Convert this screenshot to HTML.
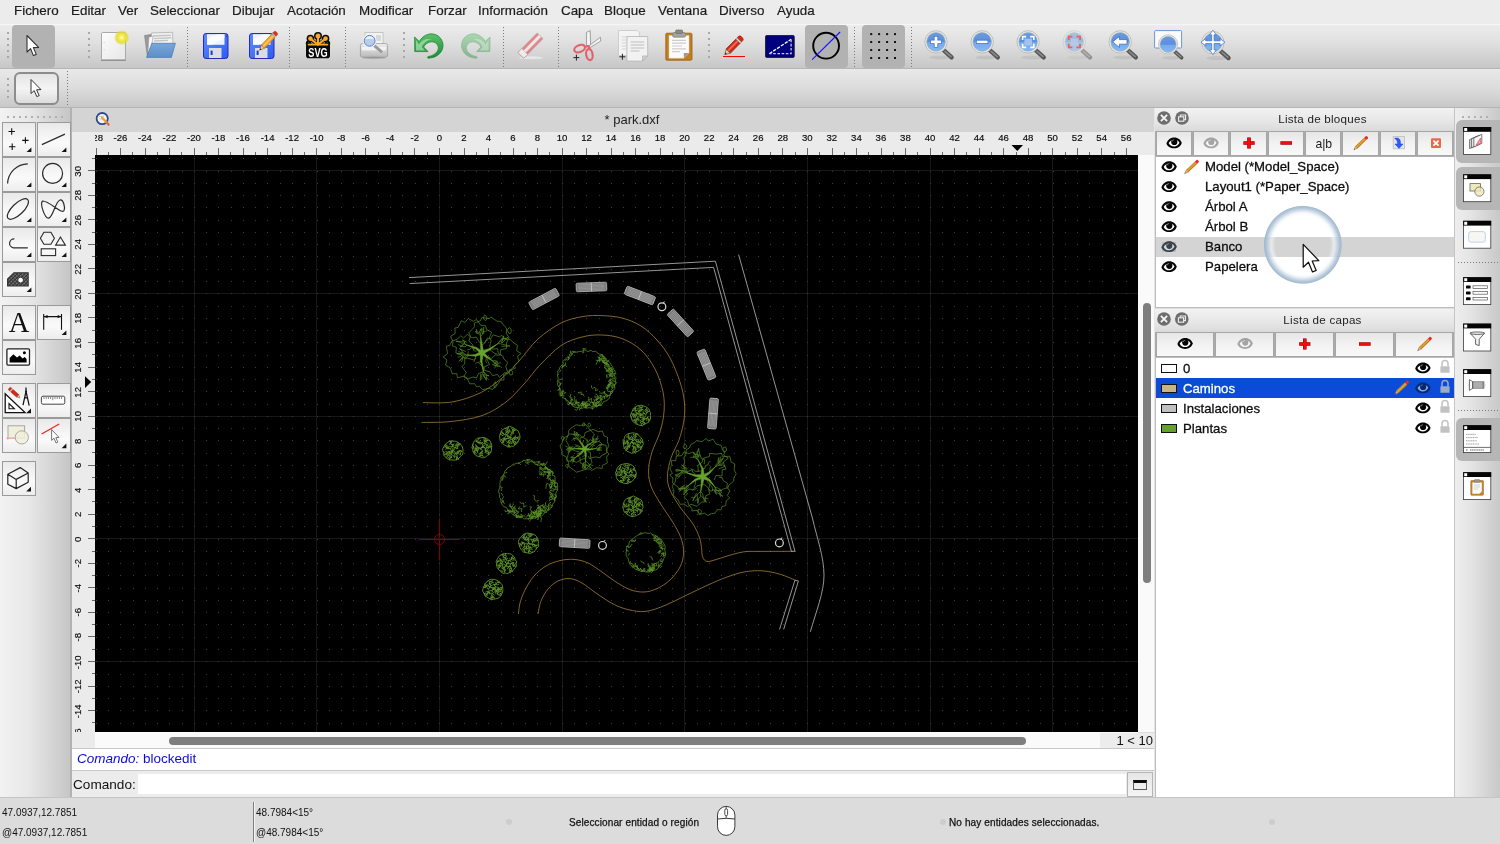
<!DOCTYPE html>
<html><head><meta charset="utf-8"><title>QCAD - park.dxf</title>
<style>
html,body{margin:0;padding:0;width:1500px;height:844px;overflow:hidden;background:#dcdcdc;font-family:"Liberation Sans",sans-serif;color:#1a1a1a}
*{box-sizing:border-box}
.abs{position:absolute}
#menubar{position:absolute;left:0;top:0;width:1500px;height:24px;background:#ececec}
#menubar span{position:absolute;top:2px;font-size:13.4px;line-height:18px;white-space:nowrap;color:#1c1c1c;-webkit-text-stroke:.2px #1c1c1c}
#tb1{position:absolute;left:0;top:24px;width:1500px;height:45px;background:linear-gradient(#ececec,#e0e0e0 40%,#c7c7c7);border-top:1px solid #f6f6f6;border-bottom:1px solid #b6b6b6}
#tb2{position:absolute;left:0;top:69px;width:1500px;height:39px;background:linear-gradient(#e9e9e9,#dcdcdc 50%,#c8c8c8);border-bottom:1px solid #b4b4b4}
.hdl{position:absolute;width:2px;height:26px;background:repeating-linear-gradient(#a8a8a8 0 2px,transparent 2px 6px)}
.sep{position:absolute;width:1px;height:40px;background:repeating-linear-gradient(#7a7a7a 0 1px,transparent 1px 3px)}
.tbsel{position:absolute;background:#b2b2b2;border-radius:4px}
.ic{position:absolute;overflow:visible}
.rl{position:absolute;font-size:9.6px;line-height:12px;color:#0a0a0a;-webkit-text-stroke:.15px #0a0a0a;white-space:nowrap}
.rc{text-align:center}
.rv{transform-origin:0 0;transform:translate(.4px,20.3px) rotate(-90deg);width:40px;text-align:center;margin-top:0}
</style></head><body><div id="root" style="position:absolute;left:0;top:0;width:1500px;height:844px;will-change:transform">
<div id="menubar">
<span style="left:14px">Fichero</span><span style="left:71px">Editar</span><span style="left:118px">Ver</span><span style="left:150px">Seleccionar</span><span style="left:232px">Dibujar</span><span style="left:287px">Acotación</span><span style="left:359px">Modificar</span><span style="left:428px">Forzar</span><span style="left:478px">Información</span><span style="left:561px">Capa</span><span style="left:604px">Bloque</span><span style="left:658px">Ventana</span><span style="left:719px">Diverso</span><span style="left:777px">Ayuda</span>
</div>
<div id="tb1">
<div class="hdl" style="left:7px;top:7px"></div>
<div class="tbsel" style="left:12px;top:0px;width:43px;height:43px"></div>
<div class="hdl" style="left:88px;top:7px"></div>
<div class="sep" style="left:187px;top:2px"></div>
<div class="sep" style="left:289px;top:2px"></div>
<div class="sep" style="left:345px;top:2px"></div>
<div class="hdl" style="left:403px;top:7px"></div>
<div class="sep" style="left:503px;top:2px"></div>
<div class="sep" style="left:558px;top:2px"></div>
<div class="hdl" style="left:708px;top:7px"></div>
<div class="tbsel" style="left:805px;top:0px;width:43px;height:43px"></div>
<div class="sep" style="left:854px;top:2px"></div>
<div class="tbsel" style="left:862px;top:0px;width:43px;height:43px"></div>
<div class="sep" style="left:911px;top:2px"></div>
</div>
<div id="tb2">
<div class="hdl" style="left:7px;top:9px;height:20px"></div>
<div style="position:absolute;left:14px;top:3px;width:45px;height:33px;border:2px solid #8c8c8c;border-radius:6px;background:linear-gradient(#e4e4e4,#f4f4f4 50%,#dcdcdc)"></div>
<div class="sep" style="left:67px;top:2px;height:34px"></div>
</div>
<svg style="position:absolute;left:0;top:0" width="1500" height="110" viewBox="0 0 1500 110">
<defs>
<linearGradient id="gPaper" x1="0" y1="0" x2="1" y2="1"><stop offset="0" stop-color="#fdfdfd"/><stop offset="1" stop-color="#e6e6e6"/></linearGradient>
<radialGradient id="gGlow"><stop offset="0" stop-color="#fffff4"/><stop offset="0.22" stop-color="#f8f266"/><stop offset="0.6" stop-color="#e8e02c" stop-opacity=".92"/><stop offset="0.85" stop-color="#e4da28" stop-opacity=".55"/><stop offset="1" stop-color="#e6dc28" stop-opacity="0"/></radialGradient>
<linearGradient id="gFold" x1="0" y1="0" x2="0" y2="1"><stop offset="0" stop-color="#7aa7d8"/><stop offset="1" stop-color="#5b8ec9"/></linearGradient>
<linearGradient id="gFlop" x1="0" y1="0" x2="1" y2="1"><stop offset="0" stop-color="#5f8cff"/><stop offset="1" stop-color="#2c5cf0"/></linearGradient>
<linearGradient id="gLens" x1="0" y1="0" x2="0" y2="1"><stop offset="0" stop-color="#6a9be0"/><stop offset=".5" stop-color="#5b8fdc"/><stop offset=".52" stop-color="#74a8ea"/><stop offset="1" stop-color="#86baf2"/></linearGradient>
<linearGradient id="gGreen" x1="0" y1="0" x2="0" y2="1"><stop offset="0" stop-color="#5cc06a"/><stop offset="1" stop-color="#1e8a34"/></linearGradient>
<linearGradient id="gPrinter" x1="0" y1="0" x2="0" y2="1"><stop offset="0" stop-color="#f0f0f0"/><stop offset="1" stop-color="#b8b8b8"/></linearGradient>
<g id="floppy">
 <rect x="0.5" y="0.5" width="24.5" height="25" rx="2.5" fill="url(#gFlop)" stroke="#2a2ab4" stroke-width="1"/>
 <rect x="4" y="1.2" width="17.5" height="10.6" fill="#eef2ff"/>
 <path d="M4 11.8 L4 6 L14 1.2 L21.5 1.2 L21.5 5 L9 11.8Z" fill="#ffffff" opacity=".7"/>
 <rect x="6" y="15" width="12.5" height="10" fill="#dcdce4"/>
 <rect x="7.6" y="17.6" width="2" height="4.4" fill="#1c3cc8"/>
 <rect x="22.6" y="2.6" width="1.2" height="1.2" fill="#2a2ab4"/>
</g>
<g id="pencilO"><!-- orange pencil, tip at 0,0 pointing down-left, drawn along +x then rotated -->
 <path d="M0 0 L5 -2.3 L5 2.3Z" fill="#e8c9a0" stroke="#7a5a30" stroke-width=".5"/>
 <path d="M0 0 L1.8 -.85 L1.8 .85Z" fill="#222"/>
 <rect x="5" y="-2.3" width="15" height="4.6" fill="#f4a22a" stroke="#b06a10" stroke-width=".5"/>
 <rect x="5" y="-0.8" width="15" height="1.6" fill="#ffc860"/>
 <rect x="20" y="-2.3" width="1.6" height="4.6" fill="#c8c8c8" stroke="#888" stroke-width=".4"/>
 <path d="M21.6 -2.3 h1.6 a1.6 2.3 0 0 1 0 4.6 h-1.6z" fill="#e03020" stroke="#902010" stroke-width=".4"/>
</g>
<g id="mag"><!-- magnifier centered at 0,0 -->
 <ellipse cx="4" cy="15.5" rx="11" ry="2" fill="#000" opacity=".07"/>
 <path d="M7.6 8.2 L15.6 15.4" stroke="#555" stroke-width="4.4" stroke-linecap="round"/>
 <path d="M9 9.4 L15 14.8" stroke="#8a8a8a" stroke-width="1.6" stroke-linecap="round"/>
 <circle r="11.2" fill="#e9e9e4" stroke="#b4b4ac" stroke-width=".8"/>
 <circle r="9.3" fill="url(#gLens)" stroke="#9aa8b8" stroke-width=".6"/>
</g>
</defs>
<!-- arrow (selected) -->
<path d="M27 35.5 L27 52 L30.6 48.6 L33.4 55.6 L36.2 54.4 L33.4 47.6 L38.6 47.4Z" fill="#fff" stroke="#333" stroke-width="1.1" stroke-linejoin="round"/>
<!-- options arrow -->
<path d="M31 79.5 L31 93.6 L34.2 90.6 L36.8 96.6 L39.2 95.6 L36.6 89.8 L41 89.6Z" fill="#fff" stroke="#333" stroke-width="1" stroke-linejoin="round"/>
<!-- new -->
<rect x="101.5" y="32.5" width="24" height="27.5" rx="1.2" fill="url(#gPaper)" stroke="#a9a9a9"/>
<path d="M101 60.3 h25" stroke="#8e8e8e" stroke-width="1.2"/>
<rect x="103.6" y="42" width="1" height=".8" fill="#bbb"/><rect x="103.6" y="49.4" width="1" height=".8" fill="#bbb"/>
<circle cx="121.7" cy="37.6" r="7.6" fill="url(#gGlow)"/>
<!-- open -->
<path d="M144.6 35.5 L151 34.5 L152 56.5 L147.5 57 Z" fill="#9a9a9a" stroke="#777" stroke-width=".6"/>
<path d="M151.5 33 L172.5 32.3 L173 45 L152 47Z" fill="#f2f2f2" stroke="#9a9a9a" stroke-width=".6"/>
<path d="M153 36 L171 35.2 M153.6 38.6 L171.4 37.8 M154 41 L168 40.4" stroke="#c4c4c4" stroke-width="1.4"/>
<path d="M149 37 L153 36.4 L150.6 52 L148 52Z" fill="#fafafa" stroke="#999" stroke-width=".5"/>
<path d="M151.8 43.3 L175.4 43.3 L171.4 57.4 L146.6 57.4Z" fill="url(#gFold)" stroke="#4d7fbd" stroke-width=".8" stroke-linejoin="round"/>
<!-- save / save as -->
<use href="#floppy" x="203" y="33"/>
<use href="#floppy" x="249" y="33"/>
<g transform="translate(259.6,50.2) rotate(-46.5)"><use href="#pencilO"/></g>
<!-- svg icon -->
<g fill="#0a0a0a" stroke="#0a0a0a" stroke-width="3.6" stroke-linecap="round">
<circle cx="318" cy="36" r="2.2"/><circle cx="310.4" cy="38.6" r="2"/><circle cx="325.6" cy="38.6" r="2"/><circle cx="308.6" cy="43.4" r="1"/><circle cx="327.4" cy="43.4" r="1"/>
<path d="M318 45V36M318 45L310.4 38.6M318 45L325.6 38.6"/>
</g>
<rect x="306" y="43.6" width="24" height="14.6" rx="2.8" fill="#0a0a0a"/>
<g fill="#f9a72b" stroke="#f9a72b" stroke-width="2" stroke-linecap="round">
<circle cx="318" cy="36" r="1.5"/><circle cx="310.4" cy="38.6" r="1.3"/><circle cx="325.6" cy="38.6" r="1.3"/>
<path d="M318 44.6V36M318 44.6L310.4 38.6M318 44.6L325.6 38.6"/>
<path d="M308.6 44.6H327.4" stroke-width="1.8"/>
</g>
<g transform="translate(318,56.6) scale(1,1.22)"><text x="0" y="0" text-anchor="middle" font-family="Liberation Sans, sans-serif" font-weight="bold" font-size="10.4" fill="#fff" textLength="19.4" lengthAdjust="spacingAndGlyphs">SVG</text></g>
<!-- print preview -->
<rect x="365" y="32.4" width="18" height="13" fill="#f3f3f3" stroke="#bcbcbc" stroke-width=".8"/>
<rect x="376" y="35" width="5" height="6" fill="#d8d8d8"/>
<rect x="360.4" y="43.6" width="27.2" height="13.6" rx="2" fill="url(#gPrinter)" stroke="#9a9a9a" stroke-width=".8"/>
<rect x="362" y="47" width="24" height="3.4" fill="#f7f7f7" opacity=".8"/>
<ellipse cx="374" cy="58" rx="12" ry="1.2" fill="#000" opacity=".15"/>
<path d="M374 45.4 L381 51.4" stroke="#9a9a9a" stroke-width="3" stroke-linecap="round"/>
<circle cx="369.6" cy="40.8" r="6.2" fill="#dfe9f7" stroke="#f2f2f2" stroke-width="1.6"/>
<circle cx="369.6" cy="40.8" r="5.4" fill="#b7cdea" stroke="#5a86cf" stroke-width="1"/>
<path d="M365.4 39.4 a4.4 4.4 0 0 1 8.4 0 a9 5 0 0 0 -8.4 0z" fill="#eaf2fc"/>
<!-- undo -->
<g id="undo">
<path d="M414.6 37 L414.8 51.6 L428 51.6 L423.6 47 C426.4 41.8 433.4 39.8 437.2 44.4 C440.4 48.6 437 55 428.2 56.6 C427 57 427.4 58.4 428.6 58.2 C438 57.6 443.6 51.4 443 44.4 C442.2 36.8 435 32.6 428.6 34.2 C424.4 35.2 421 38 419.4 41.6Z" fill="url(#gGreen)" stroke="#1f8a36" stroke-width=".8" stroke-linejoin="round"/>
<path d="M416 40 L416 50.4 L425 50.4 L421.8 47 C423.8 42.6 427.6 39.8 432 39.6 C426 37.6 420.6 41 419 44.4Z" fill="#a6e0ae" opacity=".75"/>
</g>
<g transform="translate(904.6,0) scale(-1,1)" opacity=".42"><use href="#undo"/></g>
<!-- eraser (disabled) -->
<g opacity=".6">
<ellipse cx="531" cy="57.8" rx="12" ry="1.5" fill="#fff" opacity=".8"/>
<g transform="translate(522.2,54) rotate(-45.5)">
<rect x="-2" y="-4.2" width="27.6" height="8.4" rx="1" fill="#e0525a"/>
<rect x="-2" y="-4.2" width="5.6" height="8.4" fill="#fdfdfd" stroke="#999" stroke-width=".6"/>
<rect x="3.6" y="-1.5" width="22" height="3" fill="#f8f0f0"/>
<rect x="-2" y="-4.2" width="27.6" height="8.4" rx="1" fill="none" stroke="#a88" stroke-width=".6"/>
</g></g>
<!-- scissors -->
<path d="M586.6 46 L586.4 32.4 L590.2 30.6 L590.6 45.6Z" fill="#f3f3f3" stroke="#8e8e8e" stroke-width=".8"/>
<path d="M588 46.6 L600.4 37.2 L600.8 41 L590 47.6Z" fill="#f3f3f3" stroke="#8e8e8e" stroke-width=".8"/>
<ellipse cx="579.6" cy="48.6" rx="5.6" ry="3.4" transform="rotate(-22 579.6 48.6)" fill="none" stroke="#e0646c" stroke-width="2.2"/>
<ellipse cx="589.4" cy="54.6" rx="3.2" ry="5.6" transform="rotate(-10 589.4 54.6)" fill="none" stroke="#e0646c" stroke-width="2.2"/>
<path d="M584.4 47 L588.6 46 L590 49.6" fill="none" stroke="#e0646c" stroke-width="2"/>
<path d="M573.4 57.6 h6 M576.4 54.6 v6" stroke="#222" stroke-width="1"/>
<!-- copy -->
<path d="M618.5 30.5 h18.5 l2.4 2.4 v22.6 h-20.9z" fill="#f4f4f4" stroke="#c6c6c6" stroke-width=".8"/>
<path d="M621.6 37 h5 M621.6 40 h5 M621.6 43 h5 M621.6 46 h5 M621.6 49 h5" stroke="#d2d2d2" stroke-width="1.2"/>
<path d="M626.9 36.5 h20.8 v19.4 l-5.2 5.2 h-15.6z" fill="#f2f2f2" stroke="#b4b4b4" stroke-width=".8"/>
<path d="M647.7 55.9 l-5.2 5.2 v-5.2z" fill="#d0d0d0" stroke="#aaa" stroke-width=".6"/>
<path d="M630.6 42 h13.6 M630.6 45 h13.6 M630.6 48 h13.6 M630.6 51 h9" stroke="#d0d0d0" stroke-width="1.3"/>
<path d="M619.4 56.8 h6 M622.4 53.8 v6" stroke="#222" stroke-width="1"/>
<!-- paste -->
<rect x="665.8" y="33.2" width="26.2" height="27" rx="1.2" fill="#c47e1c" stroke="#9a5e10" stroke-width=".8"/>
<path d="M669 35.4 h20 v17.6 l-5.2 5.2 h-14.8z" fill="#fbfbfb" stroke="#cfcfcf" stroke-width=".5"/>
<path d="M689 53 l-5.2 5.2 v-5.2z" fill="#9a9a9a"/>
<path d="M672 40.4 h14 M672 43.2 h14 M672 46 h10 M672 48.8 h14 M672 51.6 h8" stroke="#cdcdcd" stroke-width="1.2"/>
<rect x="672.6" y="32.6" width="13" height="4.6" rx="1.4" fill="#a4a49c" stroke="#77776f" stroke-width=".6"/>
<rect x="675.6" y="30" width="7" height="3.4" rx="1" fill="#8c8c84" stroke="#66665f" stroke-width=".6"/>
<!-- red pencil -->
<path d="M723 56.5 h22" stroke="#f00" stroke-width="1"/>
<g transform="translate(724.8,54.6) rotate(-45.5) scale(1.02,1.3)">
 <path d="M0 0 L5 -2.3 L5 2.3Z" fill="#e8c9a0" stroke="#5a4020" stroke-width=".5"/>
 <path d="M0 0 L1.8 -.85 L1.8 .85Z" fill="#222"/>
 <rect x="5" y="-2.3" width="13.6" height="4.6" fill="#d8281c" stroke="#6a3010" stroke-width=".6"/>
 <rect x="5" y="-1" width="13.6" height="1.4" fill="#f06a50"/>
 <rect x="18.6" y="-2.3" width="1.8" height="4.6" fill="#d8d8d8" stroke="#888" stroke-width=".4"/>
 <path d="M20.4 -2.3 h1.8 a1.8 2.3 0 0 1 0 4.6 h-1.8z" fill="#e02818" stroke="#801808" stroke-width=".5"/>
</g>
<!-- draft -->
<rect x="765.6" y="35.6" width="28.6" height="21.8" rx=".8" fill="#00007e" stroke="#1e1e2a" stroke-width="1"/>
<path d="M769.4 53.7 L791.1 39.3" stroke="#fff" stroke-width="1.3" stroke-dasharray="3.4 1.2"/>
<path d="M791.1 39.6 V53.7 H769.6" fill="none" stroke="#c8c8e8" stroke-width="1.3" stroke-dasharray="2.6 1.6"/>
<!-- circle slash -->
<circle cx="826.1" cy="45.7" r="12.9" fill="none" stroke="#000" stroke-width="1.9"/>
<path d="M812.1 59.7 L840.1 32" stroke="#1414ff" stroke-width="1.1"/>
<!-- grid dots -->
<g fill="#111">
<rect x="870.2" y="33.1" width="2" height="2"/><rect x="878.1" y="33.1" width="2" height="2"/><rect x="886.1" y="33.1" width="2" height="2"/><rect x="894" y="33.1" width="2" height="2"/>
<rect x="870.2" y="41" width="2" height="2"/><rect x="878.1" y="41" width="2" height="2"/><rect x="886.1" y="41" width="2" height="2"/><rect x="894" y="41" width="2" height="2"/>
<rect x="870.2" y="49" width="2" height="2"/><rect x="878.1" y="49" width="2" height="2"/><rect x="886.1" y="49" width="2" height="2"/><rect x="894" y="49" width="2" height="2"/>
<rect x="870.2" y="57" width="2" height="2"/><rect x="878.1" y="57" width="2" height="2"/><rect x="886.1" y="57" width="2" height="2"/><rect x="894" y="57" width="2" height="2"/>
</g>
<!-- zoom in -->
<use href="#mag" x="936" y="41.9"/>
<path d="M930.4 41.9 h11.2 M936 36.3 v11.2" stroke="#3a6cc0" stroke-width="4.4"/>
<path d="M930.9 41.9 h10.2 M936 36.8 v10.2" stroke="#fff" stroke-width="2.8"/>
<!-- zoom out -->
<use href="#mag" x="982.2" y="41.9"/>
<path d="M976.2 41.9 h12" stroke="#3a6cc0" stroke-width="4.2"/>
<path d="M976.8 41.9 h10.8" stroke="#fff" stroke-width="2.6"/>
<!-- zoom auto -->
<use href="#mag" x="1028.1" y="41.9"/>
<g fill="none" stroke="#fff" stroke-width="1.6"><path d="M1022.6 40 v-3.4 h3.6 M1030.2 36.6 h3.6 v3.4 M1033.8 43.8 v3.6 h-3.6 M1026.2 47.4 h-3.6 v-3.6"/></g>
<rect x="1024.4" y="38.6" width="7.6" height="6.8" fill="#a8c6f0" opacity=".9"/>
<!-- zoom selection (disabled) -->
<g opacity=".5"><use href="#mag" x="1074.3" y="41.9"/></g>
<g fill="none" stroke="#e86464" stroke-width="1.9"><path d="M1068.8 40 v-3.4 h3.6 M1076.4 36.6 h3.6 v3.4 M1080 43.8 v3.6 h-3.6 M1072.4 47.4 h-3.6 v-3.6"/></g>
<rect x="1070.8" y="38.8" width="7.2" height="6.4" fill="#b8cce8" opacity=".8"/>
<!-- zoom prev -->
<use href="#mag" x="1120.2" y="41.9"/>
<path d="M1112.6 41.9 L1119.4 36.4 V39.6 H1127 V44.2 H1119.4 V47.4Z" fill="#fff" stroke="#3a6cc0" stroke-width=".8" stroke-linejoin="round"/>
<!-- zoom window -->
<rect x="1154.6" y="30.6" width="27" height="17.4" rx="1" fill="#fbfbfd" stroke="#6a94dc" stroke-width="1"/>
<g transform="translate(1168.1,44.4) scale(.86)"><use href="#mag"/></g>
<!-- pan -->
<use href="#mag" x="1212.9" y="42.6"/>
<g fill="#fff" stroke="#3a6cc0" stroke-width=".7" stroke-linejoin="round">
<path d="M1212.9 30.2 l3.4 4.6 h-2.2 v6 h6 v-2.2 l4.8 3.6 l-4.8 3.6 v-2.2 h-6 v6.2 h2.2 l-3.4 4.8 l-3.4 -4.8 h2.2 v-6.2 h-6 v2.2 l-4.8 -3.6 l4.8 -3.6 v2.2 h6 v-6 h-2.2z"/>
</g>
</svg>
<style>.lb{position:absolute;width:34px;height:34.5px;border:1px solid #9a9a9a;background:linear-gradient(#e9e9e9,#f6f6f6 45%,#fafafa 60%,#ededed)}</style>
<div style="position:absolute;left:0;top:108px;width:70px;height:690px;background:linear-gradient(90deg,#f2f2f2,#e8e8e8 40%,#c6c6c6)"></div>
<div style="position:absolute;left:70px;top:108px;width:2px;height:690px;background:#b2b2b2"></div>
<div style="position:absolute;left:7px;top:116px;width:58px;height:2px;background:repeating-linear-gradient(90deg,#b0b0b0 0 2px,transparent 2px 6px)"></div>
<div class="lb" style="left:2px;top:122px"></div>
<div class="lb" style="left:37px;top:122px"></div>
<div class="lb" style="left:2px;top:157px"></div>
<div class="lb" style="left:37px;top:157px"></div>
<div class="lb" style="left:2px;top:192px"></div>
<div class="lb" style="left:37px;top:192px"></div>
<div class="lb" style="left:2px;top:227px"></div>
<div class="lb" style="left:37px;top:227px"></div>
<div class="lb" style="left:2px;top:262px"></div>
<div class="lb" style="left:2px;top:305px"></div>
<div class="lb" style="left:37px;top:305px"></div>
<div class="lb" style="left:2px;top:340px"></div>
<div class="lb" style="left:2px;top:383px"></div>
<div class="lb" style="left:37px;top:383px"></div>
<div class="lb" style="left:2px;top:418px"></div>
<div class="lb" style="left:37px;top:418px"></div>
<div class="lb" style="left:2px;top:461px"></div>
<svg style="position:absolute;left:0;top:108px" width="72" height="400" viewBox="0 108 72 400" fill="none" stroke="#2a2a2a" stroke-width="1">
<defs><path id="ct" d="M0 0 v4.6 h-4.8z" fill="#111" stroke="none"/>
<pattern id="hat" width="2.6" height="2.6" patternUnits="userSpaceOnUse" patternTransform="rotate(-45)"><rect width="2.6" height="2.6" fill="#f0f0f0"/><rect width="2.6" height=".8" fill="#8c8c8c"/></pattern></defs>
<!-- points -->
<path d="M8.5 131.5 h6.4 M11.7 128.3 v6.4 M22.2 140.4 h6.4 M25.4 137.2 v6.4 M9 146.7 h6.4 M12.2 143.5 v6.4" stroke="#111" stroke-width="1.1"/>
<use href="#ct" x="31.4" y="147.4"/><use href="#ct" x="66.4" y="147.4"/>
<path d="M41.9 144.6 L64.9 134.1" stroke-width="1.2"/>
<!-- arc circle -->
<path d="M7.6 183.6 A20.4 20.4 0 0 1 27.8 163.8" stroke-width="1.2"/>
<circle cx="52.6" cy="173.4" r="10" stroke-width="1.2"/>
<use href="#ct" x="31.4" y="182.4"/><use href="#ct" x="66.4" y="182.4"/>
<!-- ellipse spline -->
<ellipse cx="17.9" cy="209" rx="13.6" ry="5.6" transform="rotate(-44 17.9 209)" stroke-width="1.2"/>
<path d="M42.6 201 C39.5 204 45 218.6 48.6 218.2 C52.8 217.8 55.4 201.4 60 200 C63.4 199 65.4 207.4 64 210.6 C62 214.6 49 200.6 42.6 201Z" stroke-width="1.2"/>
<use href="#ct" x="31.4" y="217.4"/><use href="#ct" x="66.4" y="217.4"/>
<!-- polyline, shapes -->
<path d="M14.4 238.9 A4.5 4.5 0 0 0 13.2 247.8 L27.8 247.8" stroke-width="1.2"/>
<path d="M40.4 238.2 L43.9 232.2 H50.9 L54.4 238.2 L50.9 244.2 H43.9Z" stroke-width="1.1"/>
<path d="M60.4 237 L65.4 245.1 H55.6Z" stroke-width="1.1"/>
<rect x="41.2" y="248.8" width="14.4" height="6.8" stroke-width="1.1"/>
<use href="#ct" x="31.4" y="252.4"/><use href="#ct" x="66.4" y="252.4"/>
<!-- hatch -->
<path d="M7.6 286 V279.1 L14 272.8 H28.2 V286Z" fill="url(#hat)" stroke="#333" stroke-width="1.1"/>
<circle cx="20.6" cy="280.1" r="2.9" fill="#fafafa" stroke="#333"/>
<use href="#ct" x="31.4" y="287.4"/>
<!-- dimension -->
<path d="M43.7 314 V329.8 M61.5 314 V329.8 M44 316.6 H61" stroke="#111" stroke-width="1.1"/>
<path d="M44 316.6 l3.6 -1.6 v3.2z M61.2 316.6 l-3.6 -1.6 v3.2z" fill="#111" stroke="none"/>
<use href="#ct" x="66.4" y="330.4"/>
<!-- image -->
<rect x="6.9" y="348.9" width="22.6" height="16.2" rx="1" fill="#fff" stroke="#222" stroke-width="1.3"/>
<path d="M9.6 362.6 V358 L13.4 354.2 L17 357.6 L19.6 355.6 L22.6 358.4 L24.6 357 L26.6 359 V362.6Z" fill="#000" stroke="none"/>
<circle cx="24.4" cy="352.8" r="1.5" fill="#000" stroke="none"/>
<!-- modify -->
<path d="M5.2 393.8 V412.6 H25 Z" fill="#fff" stroke="#111" stroke-width="1.3"/>
<path d="M9 403.6 V408.8 H14.4Z" stroke="#111" stroke-width="1.1"/>
<g transform="translate(19.8,397.8) rotate(-138)"><path d="M0 0 L3 -1.7 L3 1.7Z" fill="#e8c9a0" stroke="#5a4020" stroke-width=".4"/><rect x="3" y="-1.7" width="8" height="3.4" fill="#d8281c" stroke="#7a2010" stroke-width=".4"/><rect x="11" y="-1.7" width="1.2" height="3.4" fill="#ccc" stroke="none"/><path d="M12.2 -1.7 h1 a1.2 1.7 0 0 1 0 3.4 h-1z" fill="#e02818" stroke="#801808" stroke-width=".4"/></g>
<path d="M26 387.4 V391.4 M26 391.4 L23 405.2 M26 391.4 L29.2 405.6 M24.4 397.8 H27.6" stroke="#111" stroke-width="1.25"/>
<circle cx="26" cy="391.4" r="1" fill="#111" stroke="none"/>
<use href="#ct" x="31" y="408.6"/>
<!-- ruler -->
<rect x="41.4" y="396.2" width="23.4" height="8" rx="1.6" fill="#fdfdfd" stroke="#444" stroke-width="1"/>
<path d="M44 397 v2 M46.2 397 v2 M48.4 397 v2 M50.6 397 v2 M52.8 397 v3.2 M55 397 v2 M57.2 397 v2 M59.4 397 v2 M61.6 397 v2" stroke="#555" stroke-width=".7"/>
<!-- block (faded) -->
<rect x="8" y="425.8" width="16.6" height="12.4" fill="#f1eedb" stroke="#a8a8a0" stroke-width="1"/>
<circle cx="21.8" cy="437.4" r="6.6" fill="#f1eedb" fill-opacity=".85" stroke="#a8a8a0" stroke-width="1"/>
<circle cx="7.8" cy="438.2" r="1.3" fill="#f0a0a0" stroke="none"/>
<path d="M8 438.2 H15" stroke="#f0b0b0" stroke-width="1"/>
<!-- snap -->
<path d="M41.6 433.9 L59.2 424" stroke="#f02020" stroke-width="1.2"/>
<path d="M51.6 429.6 V440.4 L54 438.2 L56 443 L57.8 442.2 L55.8 437.6 L59 437.4Z" fill="#fff" stroke="#666" stroke-width=".9" stroke-linejoin="round"/>
<use href="#ct" x="66.4" y="443.6"/>
<!-- 3d -->
<path d="M20.2 467.6 L28.2 473 V482.2 L16.2 488.6 L7.8 484.2 V474.2Z M7.8 474.2 L16.2 479.4 L28.2 473 M16.2 479.4 V488.6" stroke="#222" stroke-width="1.2" stroke-linejoin="round"/>
<use href="#ct" x="31" y="486.8"/>
</svg>
<div style="position:absolute;left:2px;top:305px;width:34px;height:35px;text-align:center;font-family:'Liberation Serif',serif;font-size:28.5px;line-height:35px;color:#111">A</div>
<!-- document area -->
<div style="position:absolute;left:72px;top:108px;width:1083px;height:24px;background:#d4d4d4"></div>
<div style="position:absolute;left:72px;top:111px;width:1083px;text-align:center;font-size:13px;line-height:18px;color:#222;padding-left:37px">* park.dxf</div>
<div style="position:absolute;left:72px;top:132px;width:1082px;height:23px;background:#ebebeb"></div>
<div style="position:absolute;left:72px;top:155px;width:23px;height:577px;background:#ebebeb"></div>
<svg style="position:absolute;left:0;top:0" width="1500" height="844" shape-rendering="crispEdges"><rect x="96" y="148" width="1" height="7" fill="#6a6a6a"/><rect x="108" y="152" width="1" height="3" fill="#6a6a6a"/><rect x="120" y="148" width="1" height="7" fill="#6a6a6a"/><rect x="132" y="152" width="1" height="3" fill="#6a6a6a"/><rect x="145" y="148" width="1" height="7" fill="#6a6a6a"/><rect x="157" y="152" width="1" height="3" fill="#6a6a6a"/><rect x="169" y="148" width="1" height="7" fill="#6a6a6a"/><rect x="181" y="152" width="1" height="3" fill="#6a6a6a"/><rect x="194" y="148" width="1" height="7" fill="#6a6a6a"/><rect x="206" y="152" width="1" height="3" fill="#6a6a6a"/><rect x="218" y="148" width="1" height="7" fill="#6a6a6a"/><rect x="230" y="152" width="1" height="3" fill="#6a6a6a"/><rect x="243" y="148" width="1" height="7" fill="#6a6a6a"/><rect x="255" y="152" width="1" height="3" fill="#6a6a6a"/><rect x="267" y="148" width="1" height="7" fill="#6a6a6a"/><rect x="280" y="152" width="1" height="3" fill="#6a6a6a"/><rect x="292" y="148" width="1" height="7" fill="#6a6a6a"/><rect x="304" y="152" width="1" height="3" fill="#6a6a6a"/><rect x="316" y="148" width="1" height="7" fill="#6a6a6a"/><rect x="329" y="152" width="1" height="3" fill="#6a6a6a"/><rect x="341" y="148" width="1" height="7" fill="#6a6a6a"/><rect x="353" y="152" width="1" height="3" fill="#6a6a6a"/><rect x="365" y="148" width="1" height="7" fill="#6a6a6a"/><rect x="378" y="152" width="1" height="3" fill="#6a6a6a"/><rect x="390" y="148" width="1" height="7" fill="#6a6a6a"/><rect x="402" y="152" width="1" height="3" fill="#6a6a6a"/><rect x="414" y="148" width="1" height="7" fill="#6a6a6a"/><rect x="427" y="152" width="1" height="3" fill="#6a6a6a"/><rect x="439" y="148" width="1" height="7" fill="#6a6a6a"/><rect x="451" y="152" width="1" height="3" fill="#6a6a6a"/><rect x="464" y="148" width="1" height="7" fill="#6a6a6a"/><rect x="476" y="152" width="1" height="3" fill="#6a6a6a"/><rect x="488" y="148" width="1" height="7" fill="#6a6a6a"/><rect x="500" y="152" width="1" height="3" fill="#6a6a6a"/><rect x="513" y="148" width="1" height="7" fill="#6a6a6a"/><rect x="525" y="152" width="1" height="3" fill="#6a6a6a"/><rect x="537" y="148" width="1" height="7" fill="#6a6a6a"/><rect x="549" y="152" width="1" height="3" fill="#6a6a6a"/><rect x="562" y="148" width="1" height="7" fill="#6a6a6a"/><rect x="574" y="152" width="1" height="3" fill="#6a6a6a"/><rect x="586" y="148" width="1" height="7" fill="#6a6a6a"/><rect x="598" y="152" width="1" height="3" fill="#6a6a6a"/><rect x="611" y="148" width="1" height="7" fill="#6a6a6a"/><rect x="623" y="152" width="1" height="3" fill="#6a6a6a"/><rect x="635" y="148" width="1" height="7" fill="#6a6a6a"/><rect x="648" y="152" width="1" height="3" fill="#6a6a6a"/><rect x="660" y="148" width="1" height="7" fill="#6a6a6a"/><rect x="672" y="152" width="1" height="3" fill="#6a6a6a"/><rect x="684" y="148" width="1" height="7" fill="#6a6a6a"/><rect x="697" y="152" width="1" height="3" fill="#6a6a6a"/><rect x="709" y="148" width="1" height="7" fill="#6a6a6a"/><rect x="721" y="152" width="1" height="3" fill="#6a6a6a"/><rect x="733" y="148" width="1" height="7" fill="#6a6a6a"/><rect x="746" y="152" width="1" height="3" fill="#6a6a6a"/><rect x="758" y="148" width="1" height="7" fill="#6a6a6a"/><rect x="770" y="152" width="1" height="3" fill="#6a6a6a"/><rect x="782" y="148" width="1" height="7" fill="#6a6a6a"/><rect x="795" y="152" width="1" height="3" fill="#6a6a6a"/><rect x="807" y="148" width="1" height="7" fill="#6a6a6a"/><rect x="819" y="152" width="1" height="3" fill="#6a6a6a"/><rect x="832" y="148" width="1" height="7" fill="#6a6a6a"/><rect x="844" y="152" width="1" height="3" fill="#6a6a6a"/><rect x="856" y="148" width="1" height="7" fill="#6a6a6a"/><rect x="868" y="152" width="1" height="3" fill="#6a6a6a"/><rect x="881" y="148" width="1" height="7" fill="#6a6a6a"/><rect x="893" y="152" width="1" height="3" fill="#6a6a6a"/><rect x="905" y="148" width="1" height="7" fill="#6a6a6a"/><rect x="917" y="152" width="1" height="3" fill="#6a6a6a"/><rect x="930" y="148" width="1" height="7" fill="#6a6a6a"/><rect x="942" y="152" width="1" height="3" fill="#6a6a6a"/><rect x="954" y="148" width="1" height="7" fill="#6a6a6a"/><rect x="966" y="152" width="1" height="3" fill="#6a6a6a"/><rect x="979" y="148" width="1" height="7" fill="#6a6a6a"/><rect x="991" y="152" width="1" height="3" fill="#6a6a6a"/><rect x="1003" y="148" width="1" height="7" fill="#6a6a6a"/><rect x="1016" y="152" width="1" height="3" fill="#6a6a6a"/><rect x="1028" y="148" width="1" height="7" fill="#6a6a6a"/><rect x="1040" y="152" width="1" height="3" fill="#6a6a6a"/><rect x="1052" y="148" width="1" height="7" fill="#6a6a6a"/><rect x="1065" y="152" width="1" height="3" fill="#6a6a6a"/><rect x="1077" y="148" width="1" height="7" fill="#6a6a6a"/><rect x="1089" y="152" width="1" height="3" fill="#6a6a6a"/><rect x="1101" y="148" width="1" height="7" fill="#6a6a6a"/><rect x="1114" y="152" width="1" height="3" fill="#6a6a6a"/><rect x="1126" y="148" width="1" height="7" fill="#6a6a6a"/><rect x="92" y="722" width="3" height="1" fill="#6a6a6a"/><rect x="88" y="710" width="7" height="1" fill="#6a6a6a"/><rect x="92" y="698" width="3" height="1" fill="#6a6a6a"/><rect x="88" y="686" width="7" height="1" fill="#6a6a6a"/><rect x="92" y="673" width="3" height="1" fill="#6a6a6a"/><rect x="88" y="661" width="7" height="1" fill="#6a6a6a"/><rect x="92" y="649" width="3" height="1" fill="#6a6a6a"/><rect x="88" y="636" width="7" height="1" fill="#6a6a6a"/><rect x="92" y="624" width="3" height="1" fill="#6a6a6a"/><rect x="88" y="612" width="7" height="1" fill="#6a6a6a"/><rect x="92" y="600" width="3" height="1" fill="#6a6a6a"/><rect x="88" y="587" width="7" height="1" fill="#6a6a6a"/><rect x="92" y="575" width="3" height="1" fill="#6a6a6a"/><rect x="88" y="563" width="7" height="1" fill="#6a6a6a"/><rect x="92" y="551" width="3" height="1" fill="#6a6a6a"/><rect x="88" y="538" width="7" height="1" fill="#6a6a6a"/><rect x="92" y="526" width="3" height="1" fill="#6a6a6a"/><rect x="88" y="514" width="7" height="1" fill="#6a6a6a"/><rect x="92" y="501" width="3" height="1" fill="#6a6a6a"/><rect x="88" y="489" width="7" height="1" fill="#6a6a6a"/><rect x="92" y="477" width="3" height="1" fill="#6a6a6a"/><rect x="88" y="465" width="7" height="1" fill="#6a6a6a"/><rect x="92" y="452" width="3" height="1" fill="#6a6a6a"/><rect x="88" y="440" width="7" height="1" fill="#6a6a6a"/><rect x="92" y="428" width="3" height="1" fill="#6a6a6a"/><rect x="88" y="416" width="7" height="1" fill="#6a6a6a"/><rect x="92" y="403" width="3" height="1" fill="#6a6a6a"/><rect x="88" y="391" width="7" height="1" fill="#6a6a6a"/><rect x="92" y="379" width="3" height="1" fill="#6a6a6a"/><rect x="88" y="367" width="7" height="1" fill="#6a6a6a"/><rect x="92" y="354" width="3" height="1" fill="#6a6a6a"/><rect x="88" y="342" width="7" height="1" fill="#6a6a6a"/><rect x="92" y="330" width="3" height="1" fill="#6a6a6a"/><rect x="88" y="317" width="7" height="1" fill="#6a6a6a"/><rect x="92" y="305" width="3" height="1" fill="#6a6a6a"/><rect x="88" y="293" width="7" height="1" fill="#6a6a6a"/><rect x="92" y="281" width="3" height="1" fill="#6a6a6a"/><rect x="88" y="268" width="7" height="1" fill="#6a6a6a"/><rect x="92" y="256" width="3" height="1" fill="#6a6a6a"/><rect x="88" y="244" width="7" height="1" fill="#6a6a6a"/><rect x="92" y="232" width="3" height="1" fill="#6a6a6a"/><rect x="88" y="219" width="7" height="1" fill="#6a6a6a"/><rect x="92" y="207" width="3" height="1" fill="#6a6a6a"/><rect x="88" y="195" width="7" height="1" fill="#6a6a6a"/><rect x="92" y="183" width="3" height="1" fill="#6a6a6a"/><rect x="88" y="170" width="7" height="1" fill="#6a6a6a"/><rect x="92" y="158" width="3" height="1" fill="#6a6a6a"/></svg>
<div class="rl" style="left:95px;top:132px;width:8px;overflow:hidden;height:14px"><span style="position:absolute;right:0">28</span></div>
<div class="rl rc" style="left:100.4px;top:132px;width:40px">-26</div>
<div class="rl rc" style="left:124.9px;top:132px;width:40px">-24</div>
<div class="rl rc" style="left:149.4px;top:132px;width:40px">-22</div>
<div class="rl rc" style="left:174.0px;top:132px;width:40px">-20</div>
<div class="rl rc" style="left:198.5px;top:132px;width:40px">-18</div>
<div class="rl rc" style="left:223.0px;top:132px;width:40px">-16</div>
<div class="rl rc" style="left:247.6px;top:132px;width:40px">-14</div>
<div class="rl rc" style="left:272.1px;top:132px;width:40px">-12</div>
<div class="rl rc" style="left:296.6px;top:132px;width:40px">-10</div>
<div class="rl rc" style="left:321.2px;top:132px;width:40px">-8</div>
<div class="rl rc" style="left:345.7px;top:132px;width:40px">-6</div>
<div class="rl rc" style="left:370.2px;top:132px;width:40px">-4</div>
<div class="rl rc" style="left:394.8px;top:132px;width:40px">-2</div>
<div class="rl rc" style="left:419.3px;top:132px;width:40px">0</div>
<div class="rl rc" style="left:443.8px;top:132px;width:40px">2</div>
<div class="rl rc" style="left:468.4px;top:132px;width:40px">4</div>
<div class="rl rc" style="left:492.9px;top:132px;width:40px">6</div>
<div class="rl rc" style="left:517.4px;top:132px;width:40px">8</div>
<div class="rl rc" style="left:542.0px;top:132px;width:40px">10</div>
<div class="rl rc" style="left:566.5px;top:132px;width:40px">12</div>
<div class="rl rc" style="left:591.0px;top:132px;width:40px">14</div>
<div class="rl rc" style="left:615.6px;top:132px;width:40px">16</div>
<div class="rl rc" style="left:640.1px;top:132px;width:40px">18</div>
<div class="rl rc" style="left:664.6px;top:132px;width:40px">20</div>
<div class="rl rc" style="left:689.2px;top:132px;width:40px">22</div>
<div class="rl rc" style="left:713.7px;top:132px;width:40px">24</div>
<div class="rl rc" style="left:738.2px;top:132px;width:40px">26</div>
<div class="rl rc" style="left:762.8px;top:132px;width:40px">28</div>
<div class="rl rc" style="left:787.3px;top:132px;width:40px">30</div>
<div class="rl rc" style="left:811.8px;top:132px;width:40px">32</div>
<div class="rl rc" style="left:836.4px;top:132px;width:40px">34</div>
<div class="rl rc" style="left:860.9px;top:132px;width:40px">36</div>
<div class="rl rc" style="left:885.4px;top:132px;width:40px">38</div>
<div class="rl rc" style="left:910.0px;top:132px;width:40px">40</div>
<div class="rl rc" style="left:934.5px;top:132px;width:40px">42</div>
<div class="rl rc" style="left:959.0px;top:132px;width:40px">44</div>
<div class="rl rc" style="left:983.6px;top:132px;width:40px">46</div>
<div class="rl rc" style="left:1008.1px;top:132px;width:40px">48</div>
<div class="rl rc" style="left:1032.6px;top:132px;width:40px">50</div>
<div class="rl rc" style="left:1057.2px;top:132px;width:40px">52</div>
<div class="rl rc" style="left:1081.7px;top:132px;width:40px">54</div>
<div class="rl rc" style="left:1106.2px;top:132px;width:40px">56</div>
<div class="rl rv" style="left:72px;top:710.5px">-14</div>
<div class="rl rv" style="left:72px;top:686.0px">-12</div>
<div class="rl rv" style="left:72px;top:661.5px">-10</div>
<div class="rl rv" style="left:72px;top:636.9px">-8</div>
<div class="rl rv" style="left:72px;top:612.4px">-6</div>
<div class="rl rv" style="left:72px;top:587.9px">-4</div>
<div class="rl rv" style="left:72px;top:563.3px">-2</div>
<div class="rl rv" style="left:72px;top:538.8px">0</div>
<div class="rl rv" style="left:72px;top:514.3px">2</div>
<div class="rl rv" style="left:72px;top:489.7px">4</div>
<div class="rl rv" style="left:72px;top:465.2px">6</div>
<div class="rl rv" style="left:72px;top:440.7px">8</div>
<div class="rl rv" style="left:72px;top:416.1px">10</div>
<div class="rl rv" style="left:72px;top:391.6px">12</div>
<div class="rl rv" style="left:72px;top:367.1px">14</div>
<div class="rl rv" style="left:72px;top:342.5px">16</div>
<div class="rl rv" style="left:72px;top:318.0px">18</div>
<div class="rl rv" style="left:72px;top:293.5px">20</div>
<div class="rl rv" style="left:72px;top:268.9px">22</div>
<div class="rl rv" style="left:72px;top:244.4px">24</div>
<div class="rl rv" style="left:72px;top:219.9px">26</div>
<div class="rl rv" style="left:72px;top:195.3px">28</div>
<div class="rl rv" style="left:72px;top:170.8px">30</div>
<div style="position:absolute;left:72px;top:727px;width:23px;height:5px;overflow:hidden"><div class="rl rv" style="left:0;top:8.1px">-16</div></div><svg id="cv" style="position:absolute;left:95px;top:155px;background:#000" width="1043" height="577" viewBox="0 0 1043 577">
<defs><g id="dr" fill="#3b3b3b"><rect x="1" width="1" height="1"/><rect x="13" width="1" height="1"/><rect x="25" width="1" height="1"/><rect x="38" width="1" height="1"/><rect x="50" width="1" height="1"/><rect x="62" width="1" height="1"/><rect x="74" width="1" height="1"/><rect x="87" width="1" height="1"/><rect x="99" width="1" height="1"/><rect x="111" width="1" height="1"/><rect x="123" width="1" height="1"/><rect x="136" width="1" height="1"/><rect x="148" width="1" height="1"/><rect x="160" width="1" height="1"/><rect x="172" width="1" height="1"/><rect x="185" width="1" height="1"/><rect x="197" width="1" height="1"/><rect x="209" width="1" height="1"/><rect x="222" width="1" height="1"/><rect x="234" width="1" height="1"/><rect x="246" width="1" height="1"/><rect x="258" width="1" height="1"/><rect x="271" width="1" height="1"/><rect x="283" width="1" height="1"/><rect x="295" width="1" height="1"/><rect x="307" width="1" height="1"/><rect x="320" width="1" height="1"/><rect x="332" width="1" height="1"/><rect x="344" width="1" height="1"/><rect x="356" width="1" height="1"/><rect x="369" width="1" height="1"/><rect x="381" width="1" height="1"/><rect x="393" width="1" height="1"/><rect x="406" width="1" height="1"/><rect x="418" width="1" height="1"/><rect x="430" width="1" height="1"/><rect x="442" width="1" height="1"/><rect x="455" width="1" height="1"/><rect x="467" width="1" height="1"/><rect x="479" width="1" height="1"/><rect x="491" width="1" height="1"/><rect x="504" width="1" height="1"/><rect x="516" width="1" height="1"/><rect x="528" width="1" height="1"/><rect x="540" width="1" height="1"/><rect x="553" width="1" height="1"/><rect x="565" width="1" height="1"/><rect x="577" width="1" height="1"/><rect x="590" width="1" height="1"/><rect x="602" width="1" height="1"/><rect x="614" width="1" height="1"/><rect x="626" width="1" height="1"/><rect x="639" width="1" height="1"/><rect x="651" width="1" height="1"/><rect x="663" width="1" height="1"/><rect x="675" width="1" height="1"/><rect x="688" width="1" height="1"/><rect x="700" width="1" height="1"/><rect x="712" width="1" height="1"/><rect x="724" width="1" height="1"/><rect x="737" width="1" height="1"/><rect x="749" width="1" height="1"/><rect x="761" width="1" height="1"/><rect x="774" width="1" height="1"/><rect x="786" width="1" height="1"/><rect x="798" width="1" height="1"/><rect x="810" width="1" height="1"/><rect x="823" width="1" height="1"/><rect x="835" width="1" height="1"/><rect x="847" width="1" height="1"/><rect x="859" width="1" height="1"/><rect x="872" width="1" height="1"/><rect x="884" width="1" height="1"/><rect x="896" width="1" height="1"/><rect x="908" width="1" height="1"/><rect x="921" width="1" height="1"/><rect x="933" width="1" height="1"/><rect x="945" width="1" height="1"/><rect x="958" width="1" height="1"/><rect x="970" width="1" height="1"/><rect x="982" width="1" height="1"/><rect x="994" width="1" height="1"/><rect x="1007" width="1" height="1"/><rect x="1019" width="1" height="1"/><rect x="1031" width="1" height="1"/></g></defs>
<g shape-rendering="crispEdges">
<rect x="99" y="0" width="1" height="577" fill="#171717"/>
<rect x="221" y="0" width="1" height="577" fill="#171717"/>
<rect x="344" y="0" width="1" height="577" fill="#171717"/>
<rect x="467" y="0" width="1" height="577" fill="#171717"/>
<rect x="589" y="0" width="1" height="577" fill="#171717"/>
<rect x="712" y="0" width="1" height="577" fill="#171717"/>
<rect x="835" y="0" width="1" height="577" fill="#171717"/>
<rect x="957" y="0" width="1" height="577" fill="#171717"/>
<rect x="0" y="506" width="1043" height="1" fill="#171717"/>
<rect x="0" y="383" width="1043" height="1" fill="#171717"/>
<rect x="0" y="261" width="1043" height="1" fill="#171717"/>
<rect x="0" y="138" width="1043" height="1" fill="#171717"/>
<rect x="0" y="15" width="1043" height="1" fill="#171717"/>
<use href="#dr" y="568"/>
<use href="#dr" y="555"/>
<use href="#dr" y="543"/>
<use href="#dr" y="531"/>
<use href="#dr" y="519"/>
<use href="#dr" y="506"/>
<use href="#dr" y="494"/>
<use href="#dr" y="482"/>
<use href="#dr" y="469"/>
<use href="#dr" y="457"/>
<use href="#dr" y="445"/>
<use href="#dr" y="433"/>
<use href="#dr" y="420"/>
<use href="#dr" y="408"/>
<use href="#dr" y="396"/>
<use href="#dr" y="384"/>
<use href="#dr" y="371"/>
<use href="#dr" y="359"/>
<use href="#dr" y="347"/>
<use href="#dr" y="335"/>
<use href="#dr" y="322"/>
<use href="#dr" y="310"/>
<use href="#dr" y="298"/>
<use href="#dr" y="285"/>
<use href="#dr" y="273"/>
<use href="#dr" y="261"/>
<use href="#dr" y="249"/>
<use href="#dr" y="236"/>
<use href="#dr" y="224"/>
<use href="#dr" y="212"/>
<use href="#dr" y="200"/>
<use href="#dr" y="187"/>
<use href="#dr" y="175"/>
<use href="#dr" y="163"/>
<use href="#dr" y="151"/>
<use href="#dr" y="138"/>
<use href="#dr" y="126"/>
<use href="#dr" y="114"/>
<use href="#dr" y="101"/>
<use href="#dr" y="89"/>
<use href="#dr" y="77"/>
<use href="#dr" y="65"/>
<use href="#dr" y="52"/>
<use href="#dr" y="40"/>
<use href="#dr" y="28"/>
<use href="#dr" y="16"/>
<use href="#dr" y="3"/>
</g><g transform="translate(-95,-155)" fill="none">
<path d="M423 402.6C427.8 402.5 442.5 403.6 452 402C461.5 400.4 471.7 397 480 393C488.3 389 495.5 383.3 502 378C508.5 372.7 513 367.5 519 361C525 354.5 531 345.3 538 339C545 332.7 553.5 326.8 561 323C568.5 319.2 576.2 317.7 583 316.5C589.8 315.3 595.5 315.4 602 315.6C608.5 315.9 615.5 316.3 622 318C628.5 319.7 635.2 322.3 641 326C646.8 329.7 652.2 334.7 657 340C661.8 345.3 666.2 351 670 358C673.8 365 677.6 374.7 680 382C682.4 389.3 683.7 395.7 684.4 402C685.1 408.3 684.9 413.7 684 420C683.1 426.3 681.2 433.7 679 440C676.8 446.3 672.9 452 671 458C669.1 464 667.6 470.7 667.4 476C667.2 481.3 667.9 484.8 670 490C672.1 495.2 676.2 501.3 680 507C683.8 512.7 689.7 518.8 693 524C696.3 529.2 698.1 533.7 699.6 538C701.1 542.3 701.4 548 701.8 550C701.8 558 704 561.6 708.6 561.6C720 559 736 552 748 551.4L792.5 551.3" stroke="#b48a3c" stroke-width=".72"/>
<path d="M421.6 422.4C426.3 422.3 439.9 422.7 450 421.6C460.1 420.5 472.7 418.9 482 415.6C491.3 412.3 499 407.3 506 402C513 396.7 518.3 390.2 524 384C529.7 377.8 533.8 371.4 540 365C546.2 358.6 554 350.3 561 345.6C568 340.9 575.2 338.8 582 337C588.8 335.2 595.3 334.7 602 335C608.7 335.3 615.5 336.1 622 338.6C628.5 341.1 635.5 344.9 641 350C646.5 355.1 651.3 362 655 369C658.7 376 661.5 384.8 663 392C664.5 399.2 664.5 405.3 664 412C663.5 418.7 662 425.3 660 432C658 438.7 653.9 445.7 652 452C650.1 458.3 648.8 464.3 648.6 470C648.4 475.7 649.1 480.5 651 486C652.9 491.5 656.5 497.2 660 503C663.5 508.8 668.5 515.2 672 521C675.5 526.8 679.1 532.7 681 538C682.9 543.3 683.8 548.2 683.6 553C683.4 557.8 682.3 562.5 680 567C677.7 571.5 673.8 576.4 670 580C666.2 583.6 661.3 586.6 657 588.6C652.7 590.6 648.5 591.8 644 592C639.5 592.2 634.7 591.3 630 589.6C625.3 587.9 620.7 584.9 616 582C611.3 579.1 606.7 575.2 602 572C597.3 568.8 592.7 565.1 588 563C583.3 560.9 578.7 559.8 574 559.4C569.3 559 564.7 559.5 560 560.6C555.3 561.7 550.3 563.4 546 566C541.7 568.6 537.5 572 534 576C530.5 580 527.3 585.5 525 590C522.7 594.5 521.1 599 520 603C518.9 607 518.7 612.2 518.4 614" stroke="#b48a3c" stroke-width=".72"/>
<path d="M795.5 580.3C792.9 579.3 785.6 575.8 780 574.2C774.4 572.6 768 571.2 762 570.8C756 570.4 750 570.9 744 572C738 573.1 732 575.2 726 577.4C720 579.6 714.7 582 708 585C701.3 588 693 592.1 686 595.4C679 598.7 672.7 602.3 666 605C659.3 607.7 652.3 610.6 646 611.4C639.7 612.2 633.7 610.9 628 609.6C622.3 608.3 617.3 606.2 612 603.4C606.7 600.6 601 596.4 596 593C591 589.6 586.3 585.4 582 583C577.7 580.6 574 578.9 570 578.6C566 578.3 561.7 579.3 558 581C554.3 582.7 550.8 585.7 548 589C545.2 592.3 542.7 596.8 541 601C539.3 605.2 538.5 611.8 538 614" stroke="#b48a3c" stroke-width=".72"/>
<path d="M409 277.6L715.4 261.2L795 551.3H791.4M409.6 283.6L713.6 267.4L791.4 551.3" stroke="#c6c6c6" stroke-width=".75"/>
<path d="M738.6 254.6L812.4 518C817 538 824 557 824 575.5C824 592 816 612 810.3 631.8" stroke="#c6c6c6" stroke-width=".75"/>
<path d="M798.4 580.9L783.6 629.5M794.9 580.3L779.5 629.5M794.9 580.3L798.4 580.9" stroke="#c6c6c6" stroke-width=".75"/>
<g transform="translate(544,299) rotate(-28)"><rect x="-15.2" y="-4.3" width="30.5" height="8.6" rx="1.3" fill="#787878" stroke="#bcbcbc" stroke-width=".8"/><path d="M-14.2 -2.6H14.2M-14.2 -1.3H14.2M-14.2 0H14.2M-14.2 1.3H14.2M-14.2 2.6H14.2" stroke="#b0b0b0" stroke-width=".45"/><path d="M0 -4.3V4.3" stroke="#d0d0d0" stroke-width=".7"/><path d="M-13.7 -4.3V4.3M13.7 -4.3V4.3" stroke="#6c6c6c" stroke-width=".6"/></g>
<g transform="translate(591.4,287) rotate(-2)"><rect x="-15.2" y="-4.3" width="30.5" height="8.6" rx="1.3" fill="#787878" stroke="#bcbcbc" stroke-width=".8"/><path d="M-14.2 -2.6H14.2M-14.2 -1.3H14.2M-14.2 0H14.2M-14.2 1.3H14.2M-14.2 2.6H14.2" stroke="#b0b0b0" stroke-width=".45"/><path d="M0 -4.3V4.3" stroke="#d0d0d0" stroke-width=".7"/><path d="M-13.7 -4.3V4.3M13.7 -4.3V4.3" stroke="#6c6c6c" stroke-width=".6"/></g>
<g transform="translate(639.9,295.5) rotate(21)"><rect x="-15.2" y="-4.3" width="30.5" height="8.6" rx="1.3" fill="#787878" stroke="#bcbcbc" stroke-width=".8"/><path d="M-14.2 -2.6H14.2M-14.2 -1.3H14.2M-14.2 0H14.2M-14.2 1.3H14.2M-14.2 2.6H14.2" stroke="#b0b0b0" stroke-width=".45"/><path d="M0 -4.3V4.3" stroke="#d0d0d0" stroke-width=".7"/><path d="M-13.7 -4.3V4.3M13.7 -4.3V4.3" stroke="#6c6c6c" stroke-width=".6"/></g>
<g transform="translate(680.4,322.9) rotate(47.5)"><rect x="-15.2" y="-4.3" width="30.5" height="8.6" rx="1.3" fill="#787878" stroke="#bcbcbc" stroke-width=".8"/><path d="M-14.2 -2.6H14.2M-14.2 -1.3H14.2M-14.2 0H14.2M-14.2 1.3H14.2M-14.2 2.6H14.2" stroke="#b0b0b0" stroke-width=".45"/><path d="M0 -4.3V4.3" stroke="#d0d0d0" stroke-width=".7"/><path d="M-13.7 -4.3V4.3M13.7 -4.3V4.3" stroke="#6c6c6c" stroke-width=".6"/></g>
<g transform="translate(706.4,364.6) rotate(68)"><rect x="-15.2" y="-4.3" width="30.5" height="8.6" rx="1.3" fill="#787878" stroke="#bcbcbc" stroke-width=".8"/><path d="M-14.2 -2.6H14.2M-14.2 -1.3H14.2M-14.2 0H14.2M-14.2 1.3H14.2M-14.2 2.6H14.2" stroke="#b0b0b0" stroke-width=".45"/><path d="M0 -4.3V4.3" stroke="#d0d0d0" stroke-width=".7"/><path d="M-13.7 -4.3V4.3M13.7 -4.3V4.3" stroke="#6c6c6c" stroke-width=".6"/></g>
<g transform="translate(713,413.5) rotate(94.6)"><rect x="-15.2" y="-4.3" width="30.5" height="8.6" rx="1.3" fill="#787878" stroke="#bcbcbc" stroke-width=".8"/><path d="M-14.2 -2.6H14.2M-14.2 -1.3H14.2M-14.2 0H14.2M-14.2 1.3H14.2M-14.2 2.6H14.2" stroke="#b0b0b0" stroke-width=".45"/><path d="M0 -4.3V4.3" stroke="#d0d0d0" stroke-width=".7"/><path d="M-13.7 -4.3V4.3M13.7 -4.3V4.3" stroke="#6c6c6c" stroke-width=".6"/></g>
<g transform="translate(574.6,543.2) rotate(3.5)"><rect x="-15.2" y="-4.3" width="30.5" height="8.6" rx="1.3" fill="#787878" stroke="#bcbcbc" stroke-width=".8"/><path d="M-14.2 -2.6H14.2M-14.2 -1.3H14.2M-14.2 0H14.2M-14.2 1.3H14.2M-14.2 2.6H14.2" stroke="#b0b0b0" stroke-width=".45"/><path d="M0 -4.3V4.3" stroke="#d0d0d0" stroke-width=".7"/><path d="M-13.7 -4.3V4.3M13.7 -4.3V4.3" stroke="#6c6c6c" stroke-width=".6"/></g>
<circle cx="661.9" cy="306.8" r="3.9" stroke="#dcdcdc" stroke-width="1.2"/><path d="M663.1 302.6l1.6 -.8" stroke="#dcdcdc" stroke-width="1"/>
<circle cx="602.5" cy="545.4" r="3.9" stroke="#dcdcdc" stroke-width="1.2"/><path d="M603.7 541.2l1.6 -.8" stroke="#dcdcdc" stroke-width="1"/>
<circle cx="779.4" cy="542.9" r="3.9" stroke="#dcdcdc" stroke-width="1.2"/><path d="M780.6 538.7l1.6 -.8" stroke="#dcdcdc" stroke-width="1"/>
<path d="M484.6 343.6L487.4 337.9L490.4 339L493.1 334.8L499.4 336.8L501.8 335.4L505.4 339L510.4 339.5L513.2 342.6L517.4 345.2L516.7 350.9L521.1 353.5L517.4 356.5L519.2 361.2L514.4 365.2L515.4 368.2L509.3 370.6L507.8 373.8L504.7 372.7L499.4 377.4L497.3 374.4L492.7 375.7L489.9 371.8L484.4 370.3L483.8 367.1L478.8 363.1M492.2 349.2L497.4 348.6L498.5 353.7L502.8 356L503.9 359.1L507.9 362.4L505.7 366L507.6 371.9L503.6 374.7L504 379.9L500.3 380.3L497.4 384.8L495.6 385.6L492.7 389.5L488.8 388.2L482.7 389.7L479.3 386.1L476.8 387L474.6 383.7L469.7 383.8L467 377.8L463.8 376.1L466.3 372.7L461.9 366.5L464.6 364.1L464.8 358.4L467.9 356.4L468.2 351.5M487.1 359.1L489.4 364.6L483.9 367L483.1 371.9L478.5 373.6L476.5 377.9L473 377L467.4 379.1L463.1 376.3L457.4 377.8L456.8 373.7L452 373.6L450.5 368.2L445.6 365.1L446.8 359.8L443.1 356.9L447.6 353.6L446.3 346.3L449.9 345.3L451.7 341.2L457 339.3L460.8 335.7L463.4 338L467.3 334.4L472 337.8L476.3 337.1L479.9 342.8L482.9 342.5M476 358L473.5 359.9L467.8 358.3L464.5 358.3L461.1 354.5L455.9 353.1L456.4 347.4L452.5 346.1L453 341.9L450.7 336.2L455.2 333.5L454.9 328L458.1 327.4L461.3 320.7L464.8 322.5L468.3 318.5L473.4 321.3L476.4 319.6L480.9 325.4L485.7 325.8L486.5 329.5L491.6 332.2L489.3 337.9L491.2 340.7L489.8 345.1L490.4 349.7M476.5 351.3L473.9 350.8L472.6 344.5L468.9 341.1L470.4 336.1L468.9 332.8L474.4 326.9L474.4 323L480.2 321L482 317.6L489.1 318.6L490.9 317L496.8 321L501.4 321.8L503 324.6L506.6 328.1L506.4 333.6L509.1 337.3L506.5 343.2L506.5 348.4L500.4 349.8L500.3 355.1L495.2 355L491.3 358.5L486 355.6M512.7 372.5L512.4 374.4L510.1 375.2L509.7 374.1L509.4 370.5L509.5 369.8L512.1 371L512.7 372.5M496.4 384.4L495.9 386.9L494.6 387.9L494 386.7L494 383.5L495.4 381.7L495.5 383L496.4 384.4M486.8 317.8L486.3 319.9L485.5 320.7L483.2 318.3L483.8 316.9L484.6 314.9L485.7 315.6L486.8 317.8M511.3 331.4L510.4 333.6L508.8 333.4L507.6 330.9L507.4 330.1L509.3 327.5L511 329L511.3 331.4" stroke="#548823" stroke-width=".72" stroke-linejoin="miter"/><path d="M492.7 360.9L495.2 360.6L497.5 361.4L494.1 363.3M495.2 360.6L496.7 362.2L498.5 363.5M492.7 360.9L494.1 363.2L496.5 363.8L498.5 365.3L500.4 366.7L493.5 364.9M496.5 363.8L498.6 363L500.8 362.8M492.7 360.9L494.4 362.7L496.3 364.2L497.4 366.4L492 364.1M496.3 364.2L495.6 366.3L494.5 368.3M486.6 356.8L486.2 359L485.7 361.1L487 363.4M483.4 371.3L485 373L486.4 374.9L489.1 375.8L483.1 374.5M486.4 374.9L486.7 377.1L486.8 379.3M483.4 371.3L484.4 373.5L483.9 376.1L485.4 378.2L486.6 380.4L482.6 374.4M483.9 376.1L485.4 377.7L487.6 378.4M483.4 371.3L482.6 373.5L481.6 375.7L481.9 378.3L480.2 380.3L480.8 373.5M481.2 361.2L479.2 362.2L476.9 362.5L475.2 363.9M466.6 355.1L465.2 357.2L462.5 357.6L460.8 359.4L459.3 361.3L463.5 355.7M462.5 357.6L462.4 359.9L461.4 361.9M466.6 355.1L464.2 354.5L461.8 355.2L459.4 354.1L457 353.9L463.8 353.1M461.8 355.2L460.2 356.8L457.7 357M466.6 355.1L464.5 353.8L462.6 352.4L461.4 350L459.4 348.7L465.9 351.5M462.6 352.4L460.3 352.4L458.3 351.1M475.3 355.4L475.7 357.8L474.7 359.8L473.9 361.9M467.1 345.2L465 346.9L462.4 346.1L460.1 347L464.4 343.6M462.4 346.1L460.2 345.5L458.3 344.5M467.1 345.2L465 343.8L462.5 343.9L460.5 342.4L458.2 341.6L455.8 341.1L464.3 342.1M467.1 345.2L464.8 344.1L464.4 341.2L462.3 339.9L467 342.4M475.9 348L473.8 349.1L471.5 347.7L469.5 349.6L467.3 349.8M480.6 336.2L479.5 333.9L476.6 333.3L475.3 331.2L480.7 333.2M476.6 333.3L476.9 331.1L476.3 328.9M480.6 336.2L480.7 333.8L479.7 331.5L480.9 328.9L482.5 333.8M479.7 331.5L481.2 329.9L481.9 327.6M480.6 336.2L482.4 334.4L483.2 332.1L482.7 329.3L483.8 327.2L483.3 334.2M483.2 332.1L485.4 331.5L487.3 330.5M481.4 345.2L483.5 344.2L484.8 342.4L485.9 340.3L488.3 339.7M498 343.5L499.4 341.6L500.8 339.7L503 338.2L503.7 335.8L501.8 342.6M500.8 339.7L502.9 338.8L505.1 338.4M498 343.5L499.4 341.3L502.1 341L503.4 338.7L506.2 338.5L508 337L502 343M503.4 338.7L505.6 339L507.7 339.3M498 343.5L500.4 343.8L502.7 344.2L505.1 345L507.4 345.3L509.8 346.1L501.3 346.2M489.7 349.3L491.3 351L493.1 352.2L494.9 353.5L497.2 354" stroke="#548823" stroke-width=".72" stroke-linejoin="round"/><path d="M484.6 353.1L487.1 356.2L492.7 360.9L486.1 357.4L483 355.1L482 361.3L483.4 371.3L480.4 361.1L480.4 354.8L475.6 356.2L466.6 355.1L475 354.7L479.4 352.3L475.4 348.6L467.1 345.2L476.4 347.4L480.8 350.4L480.6 345.3L480.6 336.2L482.2 345.1L483.3 350.4L489.4 348.6L498 343.5L490 350Z" fill="#66a42a" stroke="#66a42a" stroke-width=".6" stroke-linejoin="round"/>
<path d="M718.8 477.1L722.4 477.9L723.2 480.5L727.4 483.3L726.9 487.2L729.8 491L727.3 495.5L729.8 498L726.3 500.7L725.7 505.5L721.9 506.8L721.1 509.9L717.3 509.6L714.9 513.2L711.2 513.7L707.8 515.5L704.5 513.1L699.3 514.7L697.9 510.2L691.8 511L692 508.7L688.5 504.4L687.7 500.8L684.1 497.4L687.6 493.5L685.2 492.2L688.5 487.1L686.1 484.6M707 481.1L709.9 484.9L708.6 488.9L709.7 494.2L705.9 495.6L705.2 501.7L701.6 502.2L696.9 506.3L691 504.3L687.6 506.6L683.9 504L680.3 504.3L677.7 499.6L673.2 494.9L674 490.9L672.1 486.2L675.2 482.1L676.2 476.3L679.9 473.7L682.5 470.3L686.8 471.9L692.9 469.3L695.4 471.4L700.9 471M696.8 488.2L694.6 489.9L688.9 489L686.7 491.5L684.1 488.2L679 488.8L677.1 486.1L672.5 483L672.9 478L669.7 475L672.3 473.4L669.8 468.1L671.9 465.3L671.3 460.6L675.6 460.6L676.4 456L681.8 455.7L683.9 451.8L688.7 453.6L693 452.1L694.2 454.6L700.2 455.1L701.5 458.9L704.7 459.3L704.1 464.3M691.3 474.8L687.2 472.8L686.4 469.6L683.3 466.2L684.7 461.8L683.7 457.4L685.6 456L686.4 449.6L689.4 448L690.9 444.3L694.4 442.8L696.3 440.7L702.1 441.6L706.1 438.4L708.2 441.1L713.1 439.2L716 443.9L721.3 445.6L722.1 448.7L725.1 452L723.5 455.1L728.3 458.2L723.2 462.1L726 469.2L722.1 469.7L722.1 475.9L716 475.4L714.1 480M698.4 471.9L697.8 465.2L702.2 462.2L703 458.3L709.2 456.6L709.9 453.3L716.3 454.2L721.4 453.2L722.7 456.7L729.7 456.2L731.1 461.9L734.8 464L734.1 469.6L736.2 473.8L733.7 478.1L733.8 481L728.9 485.1L728.1 487.6L723.2 489L719.8 491L713.2 489.7L710.8 491.3L706.4 486L702.1 483.5M701.4 511.4L700.9 513.7L699.2 513.8L697.7 512L698 510L699.4 508.9L700.7 510.3L701.4 511.4M726.7 450L725.4 451.5L724.1 452.4L722.6 449.6L723.5 447.2L724.2 447.3L725.9 447.3L726.7 450M679.1 453.7L678.2 455L677.2 455.5L676.3 454.4L676.2 451.9L676.5 450.5L678.3 450.2L679.1 453.7M686.9 445.9L685.7 448.5L684 448.5L683.3 446.9L683.4 446.4L684.8 443.6L686.3 445.4L686.9 445.9" stroke="#548823" stroke-width=".72" stroke-linejoin="miter"/><path d="M700.7 491.7L702.7 493.5L703 496L704.1 498.1L704 500.8L706.5 502.3L701.1 495.5M704.1 498.1L706.3 498.4L708.5 498.9M700.7 491.7L700.6 494.2L700.4 496.6L698.7 498.7L698.4 501.1L697.8 503.4L697.1 494.8M698.7 498.7L696.6 499.6L695.1 501.3M700.7 491.7L698.6 493.1L697.1 495L695.4 496.7L693.8 498.5L692.8 500.8L696.6 492.9M695.4 496.7L693.4 497.6L691.1 497.8M702 483.6L700.5 485.3L698 485.4L696.1 486.6L694.7 488.5M687.6 486.1L685.8 487.9L686.8 491L685.2 492.9L683.8 494.9L684.6 487.9M687.6 486.1L686.2 488.2L683.6 488.7L681.4 489.8L679.4 491.2L683.5 485.6M683.6 488.7L681.3 488.5L679.2 489.6M687.6 486.1L685.4 487.1L683.1 487.9L680.9 488.8L678.5 489.1L684.5 485.4M695.3 479.9L695.6 482.3L695.2 484.4L694.3 486.5L694.1 488.7L692.5 490.6M687.1 472.9L684.6 472.8L682.2 473.2L680.3 475.4L678.1 476.4L675.2 475L683.1 472.1M680.3 475.4L679 477.2L677.5 478.8M687.1 472.9L684.8 472L682.5 471.3L680.2 470.6L678.2 469.1L675.3 470.1L684 470.6M680.2 470.6L678 470.8L676.1 471.9M687.1 472.9L685.2 471.2L684.7 468.7L683.5 466.6L681.5 465L687.7 469M684.7 468.7L682.4 468.6L680.6 467M695.5 475.7L694.7 473.5L692.7 472.2L692.3 469.8L690.6 468.4M698.5 460.5L696.9 458.7L694.7 457.5L693 455.9L698.7 457.1M694.7 457.5L692.5 457.3L690.3 457.4M698.5 460.5L696.4 458.9L695.9 456.5L695.1 454.2L693.4 452.3L699.2 457M698.5 460.5L697.5 458.2L698.6 455.7L696.8 453.5L698.2 450.9L698.5 448.5L700.2 456.8M696.8 453.5L697.3 451.3L698.8 449.6M702.5 468.9L704.9 468.3L705.4 465.5L707.9 465L708.6 462.5L710.5 461.3M715.5 466.5L716.2 464.2L718.1 462.3L718.1 459.8L718.9 457.5L718.8 464.6M718.1 462.3L720.1 461.4L721.9 460M715.5 466.5L717.3 464.9L718.7 463L719.8 460.7L721.8 459.2L723.6 457.7L719.1 465M719.8 460.7L720.5 458.6L721 456.4M715.5 466.5L717.8 465.6L720.2 465.3L722.6 464.8L725.1 466.3L718.6 468.9M720.2 465.3L721.7 463.5L723.7 462.6M709.2 472.8L710.2 470.8L709.9 468.5L710.7 466.4M715.1 487.3L717.5 487.9L719.6 489.1L721.5 490.6L715.9 490.5M719.6 489.1L720.7 491L721.6 493M715.1 487.3L716.2 489.5L717.9 491.2L719.9 492.7L720.7 495.1L723 496.3L715.5 491.6M719.9 492.7L719.9 494.9L721 497M715.1 487.3L715.7 489.7L715 492.1L716.6 494.4L713.6 489.5M709.4 480.3L710 482.4L710.2 484.6L711.8 486.4L712.5 488.5L712.5 490.8" stroke="#548823" stroke-width=".72" stroke-linejoin="round"/><path d="M704 479L702.8 483.6L700.7 491.7L701.2 483.5L701.2 478.8L695.6 480.6L687.6 486.1L695 479.2L700.2 477L695.4 476.4L687.1 472.9L695.6 474.9L701 474.7L701.8 469L698.5 460.5L703.3 468.9L704 474.4L708.8 472.2L715.5 466.5L709.6 473.5L705.4 476.6L709.8 479.6L715.1 487.3L709.1 481Z" fill="#66a42a" stroke="#66a42a" stroke-width=".6" stroke-linejoin="round"/>
<path d="M587.4 451.1L590.4 452.4L590.7 457.6L591.9 462.7L587.8 467L586.1 469.2L580.4 471L576.6 472.2L573.7 470L568.9 466.6L568.5 462.3L566.3 459.7L568.6 453.5L569.7 449.5L573.8 447.9L577.5 445.7L580.7 446.9M586.5 454.4L585.6 457.9L581 459.8L576.4 462.6L573.3 460.8L567.9 461.3L566.6 457.3L561.7 454.4L562 451.6L560.1 445.8L562.3 442.4L564.1 437.8L567.3 436.1L569.8 433.8L574.9 434.9L579 434.4L582.7 437.4L587.6 439.8L586.8 443.7M584.4 450.4L579.9 452.4L572.9 449.9L569.5 447.6L567.7 443.4L565.9 440.4L568.6 433.8L568.7 430.3L572.1 427.4L576.1 424.8L580.1 425.5L585.8 424.7L588.6 428.4L594.4 434L592.6 437.6L593.4 444.2L590.6 446.1L586.8 450.4M581 443.9L579.8 438.2L584.4 436.3L585.1 432.5L589.8 430.6L593 429.3L598.3 431.7L602.3 431L604.1 435.9L607.6 437.4L607.4 441.8L608.8 445.6L607.1 449L606.7 453L601 455.9L600.1 457.8L595.4 456.9L589.3 458.5L588.5 456.1M587.6 443.1L590.1 439.5L594.2 442.2L599.1 441.4L602.9 444.8L606.1 445.3L606.7 451.5L609 453.8L606.6 457L607.3 463L602.5 465.3L602.2 468.4L596.4 467.8L591.6 470.6L589.6 468.9L585.4 469.1L582.9 464.2L580.1 462.7L580.1 457.8L577.1 454.8M568 465.6L567.7 468.1L566.4 467.2L566 466.6L565.6 465.5L566.6 464.3L568.2 465L568 465.6M563.9 437.3L564 439.1L562.8 440.3L561.4 438.5L561.7 437.5L562.5 436L563.9 437.2L563.9 437.3M584.8 424.1L584.7 425.5L583.2 426L582.6 425.4L582.5 424.2L583 423.3L584.3 422.7L584.8 424.1M590.7 424.7L590.3 426.1L589.2 427L588.1 425.2L587.9 424.1L589 422.8L589.6 423.2L590.7 424.7" stroke="#548823" stroke-width=".72" stroke-linejoin="miter"/><path d="M575.5 457.5L574.1 459.5L573.3 461.8L573.8 458.4M574.1 459.5L571.9 460.1L570.3 461.8M575.5 457.5L573.7 459.1L571.3 459.9L573.3 456.9M573.7 459.1L573.2 461.2L572.5 463.3M575.5 457.5L573.1 457.7L570.6 457.5L573.8 455.6M581.1 453.5L578.8 453.4L576.7 454.1M574 448.7L571.9 449.9L569.8 451.1L567.9 452.6L571.5 448.7M569.8 451.1L567.7 450.5L565.9 449.1M574 448.7L571.6 449.4L569.2 448L566.8 449.1L571.8 447.7M569.2 448L567.2 446.9L565.3 445.9M574 448.7L571.6 448.2L569.3 447.4L573.2 446.7M571.6 448.2L569.5 449L567.6 450M579.8 448.6L578.4 446.9L576.8 445.4L574.8 444.4M577.9 439.1L575.5 438.7L573 438.5L576.8 437.5M575.5 438.7L573.3 439.2L571.6 440.8M577.9 439.1L576.3 437.3L574.8 435.5L573.2 433.7L577.9 436.3M574.8 435.5L574.5 433.3L574.8 431M577.9 439.1L578.2 436.7L576.5 434.5L576.6 432L579.3 436.8M576.5 434.5L575 432.9L573.9 430.9M582 444.2L583.1 442.2L583.6 440M592.2 442.4L592.9 440.1L593 437.6L593.8 441.4M592.9 440.1L594.8 439L597 438.5M592.2 442.4L594.2 441.1L596 439.5L598.2 438.4L594.6 442.3M596 439.5L597.3 437.7L598 435.5M592.2 442.4L594.5 441.8L596.9 441.8L593.8 443.4M587.3 445.2L589.5 444.4L591.7 444.7L593.9 444M595.7 448.6L597.2 446.7L599 445.1L601.6 444.5L598.4 448.5M599 445.1L601.2 444.9L603.4 444.7M595.7 448.6L598.1 448.2L600.4 447.3L597.3 449.7M598.1 448.2L599.8 449.6L602 450.4M595.7 448.6L598 449.5L600.3 450.1L596.6 450.5M598 449.5L599.8 448.2L602 447.8M589.7 449.6L591.8 448.5L592.5 446.1L594.8 445.3M585.5 461.3L587.7 462.5L589 464.6L590 466.9L591.7 468.6L586.2 464.5M589 464.6L591.2 465L593.3 465.7M585.5 461.3L585.5 463.7L585.6 466.1L585.1 468.5L584.3 463.4M585.6 466.1L584.3 467.9L582.5 469.2M585.5 461.3L583.8 463.1L582.8 465.3L582.8 468L583.2 462.6M585.6 454.6L583.7 455.7L582.2 457.4" stroke="#548823" stroke-width=".72" stroke-linejoin="round"/><path d="M584.2 450.8L581.5 453.8L575.5 457.5L580.7 453.1L583 449.7L579.8 449.2L574 448.7L579.9 448.1L583.2 448L581.6 444.5L577.9 439.1L582.5 443.9L584.8 447.2L586.9 444.9L592.2 442.4L587.8 445.5L586.4 448.2L589.8 449L595.7 448.6L589.7 450.1L586 450.3L586.1 454.5L585.5 461.3L585.1 454.6Z" fill="#66a42a" stroke="#66a42a" stroke-width=".6" stroke-linejoin="round"/>
<path d="M615.5 380.1L615.8 382.5L615.4 384.5L613.8 385.2L615 388L614.6 388.8L613 390.7L612.1 393.1L610.5 393.7L609.1 396.7L609.6 397.7L608.4 399.3L606.8 400.5L603.4 401.8L603.1 402.5L601.2 405.6L598.6 405.4L597.6 406.4L595 406.6L593.3 408.1L592.8 408.7L590.9 408L589.1 407.7L586.1 408.2L584.1 407.5L582.8 408.1L580.3 408.6L578.6 407.2L577.3 407.6L575.3 407.5L572.1 405.5L571.3 403.3L569.6 403L569.3 401.9L566.3 399.7L565.2 398.6L562.6 397.7L563 396.4L561.2 394.2L561 392.1L558.9 390.7L559.6 388.2L559.3 387.5L557.5 384.7L557.8 382.7L557.3 382L557.7 380.2L558.2 378.4L557.3 374.6L558.4 374.7L557.4 371.4L559 370.4L559.8 367.4L560.6 366.4L562.7 364.3L563.4 363.4L562.8 361.5L565.4 358.8L566.7 357.8L568.4 357.8L570.5 356.1L571.4 355.2L573.1 352.6L574.3 352.2L577 352.1L578.1 351.8L579.8 351.5L583.3 351L584.5 349.7L586 350.6L587.8 351.5L591.1 350.4L592.7 351.6L594.7 351.2L596.6 352.1L598.1 353.4L599.4 354.2L602 354.6L603.5 356.8L604.9 357L605.5 359.2L607.4 360.4L609.1 361.8L610.6 363.2L611 364.9L612.8 366.6L612.9 368.8L614.5 370L615.4 372.4L614.7 373.7L614.4 376.4L616.1 377.5L615.5 380.1M605 392L603.5 392L602.5 393.3L600.9 393.1L599.4 393.1M611.1 389.1L612.2 390.1L612.5 391.6M607.8 364.3L608.3 365.6L609.6 366.7M598.2 360.9L599.7 360L601.2 359.7M610.3 378.7L611 380.3L608.3 381.1L611.2 383.2L609.5 384.2M607.8 368.4L609.3 368.3L611 367.5L611.8 369.9L613.6 368.4M609.8 383.2L608.2 384.1L609.1 385.9L607.3 386.8L607.5 388.3L608 389.9M604.2 361.2L603.7 363.3L605.6 363.6L607.2 364.2L606.5 366.5L609.9 365.6M602.5 360L602.9 361.4L603 363.1M610 373.6L609.9 375.8L612.4 375.1L612 377.6M599.8 401.4L599.1 402.7L598.7 404.1L598.4 405.5L595.6 405.6L596.5 407.6M608.5 368.6L609.9 368.8L611.4 368.7L612.3 370.7L613.6 371.3M597.6 357.1L599.1 358.1L600.4 356.1L601.8 356.2L603.2 355.7L604.7 358.7M609.6 368.5L609.9 370L610.1 371.4L612.8 371.6L611.4 373.9M609.2 369.2L610.2 370.3L611.3 371.1L612.6 371.8M607.1 394.5L607.8 395.7L606.8 397.7M600.8 400.3L601.3 401.6L600.9 403.1L600.6 404.5L601 405.9M614.3 379.6L613.5 381.3L616.1 382.1L616.1 383.5M601.1 395.5L599.7 395.7L598.3 396.3L596.9 394.5L595.4 394M603.6 361.9L605 362.5L606.3 363.2L606 365.3M601.7 394.8L600.5 396L600.6 397.5L602.7 399.3L599.9 400.2M597.5 406L596.1 404.7L594.6 406.9M612.6 390.3L612 391.8L609.5 391M604.6 361.4L605.5 362.6L607.8 361.7M601.6 361.1L603 361L604.5 361.2M599.5 397.5L598.2 398.2L597.5 399.5L595.4 399.3M607.2 374.2L606.5 375.5L606.7 377M599.8 401.1L598.4 401.3L597.3 402.7M606.5 394.5L607.2 395.8L606.1 397.4M606.4 362.3L606.3 363.8L608.8 364.3M603.4 360.5L604.8 360.6L606.3 360.3L607.4 362.2L609.2 359.7M604.4 391.3L604.1 392.8L605.9 393.9L606.6 395.2L603.8 397.1L605.2 398.3M601.8 395.5L601 397L599.6 397.4L597.9 397.2M609.2 372.2L610.2 373.3L611.2 374.4L613.1 373.8L613.7 375.8M611.8 381.8L611.9 383.2L612.6 384.8L612.5 386.3L611.5 387.5M600.4 355.5L602.5 354.6L602.9 356.8L603.4 358.7L605.1 358.5M610.8 376.5L612.6 376.2L613.4 377.7M613.4 373.4L615 373.5L616.4 373.9M606.9 369.5L606.2 371.4L608.6 371.7M598.8 402.8L597.3 401.4L596.2 404.5L594.6 402.7M610 368.2L611 369.7L611.5 371.1M604.4 367.5L605.7 368.1L606.9 368.9L607.5 370.3L609 370.8L608.9 372.9M605.3 391.4L603.7 392.9L604.8 394.3L605.6 395.6L603.7 397.1M595.7 360.1L597.8 360.6L596.9 362.7L596.2 364.7M610 381.7L610 383.7L612.1 383.6M596.7 398.5L596.3 399.9L596.7 401.7M607.2 367.3L609.3 366.7L608.5 370.3M605.2 363.3L607.3 362.9L607.9 364.4L609.4 364.7M614.1 383.6L614.6 385.3L614.8 386.8L612.5 387.5L612.2 388.9M609.8 384.7L607.8 385.2L609.1 387.4L608 388.4L606.1 389M604.4 367L605.1 368.6L606.2 369.5M606.7 371L608.5 369.9L609.5 371.5M608.7 384.7L610.9 384.7L611.4 386.1L612.1 387.3L612.9 388.6M601.4 360.5L602.7 361.1L603.7 362.6L605.3 362.1L606.6 362.8M610.2 384.9L608.1 384.5L607.5 386L606.4 386.9L606.3 389M603.4 396.5L604.7 397.9L604.4 399.3M607.2 389.9L607.7 391.2L610.1 391.5L610.7 392.8L611.1 394.2M612.8 371.6L612.6 373.3L611.2 373.9L610.5 375.2L609.7 376.3M597.8 356.7L599.7 357.5L598.7 359.4L600.5 360.2L599.2 362.2M614.4 377.3L614.3 378.8L611.7 378.8M610.7 378.4L609.4 380.1L611.1 381.2L609.8 382.9L611.4 384M603.5 358.4L603.9 360.6L606.7 358.2M610.5 385.1L609.8 386.7L608.4 387.2L607.3 388.1M609.7 384.1L609.2 385.5L608.5 386.8M596.8 405L595.3 404.8L593.7 405.2L593.3 402.4L591.6 403M597.6 360.2L599.4 361L599.8 358.2L601.9 359.7L602.6 357.6M610.9 392.2L610.3 393.6L610.3 395.5L608 395.3L606.9 396.2M604.7 364.1L606.3 364.1L607.4 365M612.8 379.3L612 380.9L611.9 382.3L613.1 383.5L613.5 384.9L614.3 386.1M603.8 395.8L602.6 396.6L602 398.1L601.3 399.5L600.1 400.3M610.7 372.1L611 373.7L608.5 374.4L610.4 376.4L608.5 377.3M601.6 357.5L601.2 359.5L602.6 360.2L602.9 361.7L604 362.7L605.2 363.6M606.4 364.6L604.4 365.6L605.6 367.3M607 375.2L607.1 376.7L607 378.4M600 401.4L598.6 402L597.9 403.3M577.6 403.3L576.5 402.3L575.8 401M579.7 407L578 406.8L577.7 409.2L576.8 410.3L574.7 409.4M573.1 404.3L572.1 403.3L571.6 401.9L572 400M590.1 404.1L588.6 405.1L587.2 405.5L585.8 405.1L584.5 403.4L583.2 403.1M593.4 402.8L592 402.2L590.6 402.2L589.4 404.7L587.9 403.3M572.7 404.6L571.4 404L570.1 402.8L568.5 405.2L567.2 403.4M573.8 402.2L573 403.9L571.8 404.6M595.1 404.7L593.8 405.7L593.1 406.9L592.6 408.2L592.4 409.6M570.1 403L568.1 402.8L567.2 401.8L566.2 400.8L565.7 399.4L565.3 397.9M585.3 406.5L583.9 406.1L583 404.9M587.9 403.4L586.6 402.5L585.1 403L583.9 401.1M572.4 398.7L571.2 397.6L570.1 396.5L570.8 394.8L569.9 393.6M575.9 405.9L574.5 405.7L573.2 404.8L571.8 404.3M581.9 404L580.5 404.2L579.4 406.1L577.8 405.1L576.5 406M579.5 402.2L578.2 402.6L576.4 401.1M582.8 404.7L581.7 403.7L582.5 401.7M599.9 403.4L599.6 405.1L598.1 405.6M587.8 405.6L585.6 405.9L586.5 408.1M585 403.2L583.5 403.2L582.5 404.4L581.9 406.5L580.1 405.9L578.3 405.3M586.1 406.1L585.6 404.7L583 404.9L582.1 403.9L583.3 401.1M586.8 407.6L585.5 407L585.8 404.4L584.2 404.2L583.4 402.9L580.6 404.1M575.6 402.8L574.5 401.5L575.1 400L574.4 398.7L575 397.2L574.2 395.9M579.5 402.5L578.8 404.5L577.1 404.1L575 403M573.4 400.2L571.4 399.4L570.8 401.2L570.4 403.4L569 403.7M570.3 403L569.1 403.8L568.1 404.9M576.5 402.9L575.8 401.7L576.5 399.6M578.5 402L577.5 403.1L576.3 403.8L574.9 404.1L573.5 404.5M571.3 399L570.5 397.9L570 396.4M595.4 403.8L594.1 402.7L592.6 403.8M583.9 406.1L582.8 405.1L580.7 405.4M587.6 404.7L587.2 406L585.9 406.9L584.4 407.7M588.2 405.7L587.5 403.6L586.3 403L584 404.7L582.5 404.6L582.3 401.5M597 402.9L595.5 403.2L594.3 401.2L592.7 403.3M582.1 407.1L581 407.9L579.8 408.6L579.4 410.4M585.6 403.1L585.7 405L582.5 404.2L583.5 406.9M591.4 406.6L590.5 405.1L588.9 405.3M587.6 406.2L585.7 405.9L585.4 408M573.2 399.9L571.6 399.4L570.4 400.3M597.8 400L596.7 398.4L594.7 401.1L593.7 398.9M596.4 404.8L595.1 406L593.4 403.6L592.4 406.8L591 407.1M579 402.2L577.6 402.6L575.9 402.7L575.2 404M597.7 403.8L596.6 402.5L594.7 403.8M590 402.5L589.3 400.6L587.4 401.5L585.6 402M560.2 385.7L560.1 383.7L561.7 383.3M564.4 395.8L562.8 394.9L562.2 393.7L562.9 391.9L563 390.3M561.5 367.5L562.7 366.4L564.2 366.9M564.9 360.9L565.7 359.7L567.6 359.8L568.8 359L568.5 356.6M563.5 393.7L561.9 393.4L561.7 391.5L560.6 390.6L560.3 388.8L557.3 390.2M582 353L583.8 352.4L583.7 350.7L582.8 348.5L586.4 349M559.5 372.3L560.2 371L561 369.8M564.4 394.2L565.6 392.6L562.6 391.6L563.3 390.1M559.4 389.1L559.8 387.7L558.8 386L560.3 385L560.1 383.4L559.8 381.9M567.7 360.3L569.1 358.8L569.1 357.4L567.3 356.1M562.6 394.7L561 396L560.1 392.5L558.5 393.9M561.9 368.5L562.4 367.2L562.4 365.6L564.1 365L566 364.5L565.1 362.3M571.1 355.5L572 354.4L571.7 352.5L572.2 351.2L575.7 351.9M562.5 366.3L563.9 366.1L565.2 365.1L566.8 366.6M559.1 382.7L558.6 380.8L559.4 379.7L561.6 379.2L562.4 378M562.1 395L560.4 396.2L559.3 394.7M570.2 356.3L569.1 354.6L571.1 353.6L570.2 352L570.9 350.7M578.2 391.8L578.8 393.2L581.2 391.8L581 394.7L583 393.9L583.5 395.5L584.6 396.3M591.5 385.4L591.5 387.4L592.3 388.4L595 387.4L595.8 388.4L595.3 390.9L598.3 389.5M587.8 397L589 397.6L588.5 400.2L591.7 398.4L591.3 400.9L592 402L593.1 402.8M595 395.6L595.2 397.8L597.6 396.2L597.7 398.7L599.2 398.7L600.8 398.5L601.1 400.6" stroke="#5f9628" stroke-width=".72" stroke-linejoin="round"/>
<path d="M557.6 490.2L556.9 491L555.7 493.6L556.2 495.9L555.5 497.8L554.7 499.6L555.1 501.1L553.6 503.2L552.2 504.3L552.5 506.2L550.7 508.5L549.9 509.5L546.8 510.5L546.8 512.4L544.7 512.2L543.6 514.3L541.6 516.1L539 515.7L536.8 516.8L536 518.2L533.6 518.3L531.1 519L530.2 517.5L528.4 518.7L526.8 518.7L523.9 519L522 517.1L520.9 517.2L519 517L516 515.3L515.3 516L513.5 515.3L510.8 512.4L509.8 512.4L508.5 510.7L506.7 508.1L506.3 507.3L504 506.7L502.7 505.5L501 502.6L500.8 500.5L500.6 498.6L499.5 497.5L499.6 495L499.6 494.2L498.6 492L499 488.9L499.7 488.5L500.1 485.5L499.8 484.1L500.4 480.9L501.1 480.1L500.8 477.4L502.6 476.4L502.9 475.1L504.3 473.2L504.8 471.1L507.2 468.8L507.4 467.9L509.3 467.1L511.4 466L513.4 463.8L514 464.6L515.7 463.4L519.1 462.9L520.8 462.2L523 461.2L523.1 460.2L526.9 461.1L527.8 460.3L530.6 460L531.9 460.8L533.5 461.8L535.9 462.3L537.1 461.7L538.9 462.4L541.2 464.6L543.7 465.2L545.2 465.8L546.3 468L547.4 469.1L550.4 469.8L551.1 470.6L552.3 473L552.6 475.6L554.4 475.7L555.1 477.6L555 480.3L555.2 482.5L557.3 483L557.5 484.6L557.6 487L557.6 490.2M538.9 507.9L538.2 509.3L538.4 510.7L540 512.3L539.3 513.7M548.8 483.9L546.7 483.7L546.3 485.3L546.1 487.2L545.8 488.8M546.3 501.7L545.4 502.8L545.7 504.9L544.8 506M549.3 491.5L549.9 493L550.1 494.4M551.6 494.4L551.9 495.8L551.3 497.6M550.2 486.2L550.7 487.6L550.7 489.1M550.1 494.1L550.6 495.5L551 496.8L549.1 498.6M553.8 493.8L552.1 494.2L552.5 496.3L550.8 496.8L549.1 497.2M547 471.9L549.1 471.3L548.8 474.2M545.2 469.3L546.3 467.4L548 469L549.5 469.6M548.9 475.1L548.6 476.4L547.3 477.5L546.4 478.6M547.4 471.9L548.8 473.7L550.2 470.3M541.7 512.5L540.3 512.2L539.1 513.7L537.6 513.4L536.4 514.4M545 510.5L543.6 510.3L542.3 511.5M548 507.3L546.8 506.3L545.5 505.7L543.6 507.7L542.6 505.6M539.8 468.6L540.5 466.6L542.9 469.2L544.3 468.8L545 466.6L546.8 467.5M539.8 470.7L540.1 468.4L542.8 470.3M543.4 469L544.8 468.9L546.3 468.3M537.4 511.6L536 511.5L534.7 512.3L533.5 513.3M547.2 469.3L548.5 470.5L549.9 469.8L551.2 471.2M545.9 507L546.1 508.4L544.8 509.9L546.1 511.2L545.6 512.6M545.6 506.8L544.3 508.1L542.7 505.5L541.4 505.7L540 505.8L538.6 507.7M547 478.1L548.4 478.7L550.3 478.7L550.6 480.4L552.1 480.8M553.5 498.3L552.3 499.1L551.2 500.4M542.6 512.8L541.3 513.4L539.7 513.3L539 514.9L538 516L535.6 514.7M544.9 508.7L543.6 507.5L542 510L540.6 509.7L539.2 509.7M553.5 497L555.4 497.6L554.2 499.8L554.5 501.2M545.1 466.6L546.3 467.5L547.6 468.3M551.5 504.9L551.2 506.4L550.6 507.9M548.2 503.5L548.7 504.9L547.9 506.5L549 507.7L548.8 509.2M538.5 513.2L536.4 514.1L536.7 510.6L534 512.7M536.8 512.5L535.7 513.7L536.5 515.3L535.3 516.5M545.2 468.1L547 467.5L547.5 469.7L549.1 469.6L550.5 469.9M539.7 467.2L540.3 468.4L542.3 469.2M538.1 516.1L536.7 517.6L535.3 517.4L533.9 515.3M549.2 508.8L547.8 509.7L546.4 508.7L545 509.5M555.5 493.6L554.7 495L557 496.5L554.4 497.8L554.7 499.2L554.8 500.6M539.9 464.4L541.7 463.9L543.2 464.1L544.5 464.6M546.8 475.5L548.1 476.5L549.5 476.7M541.4 508L540.2 509.6L538.4 507L537.3 509L536 509.8M549.5 471.3L550.8 471.8L552.3 471.5L553.4 472.9M542.6 470L543.3 471.3L545.1 471.5L545.1 473.4L545.2 475.2M554 489.6L553.7 491.2L550.9 490.5M550.2 479.4L551 480.6L550.9 482.5L553.9 481.8L554.5 483.2L554.4 485.1M552.3 479.7L554.1 480.5L553.5 482.2M550.3 492.3L551.7 493.2L552.1 494.6M553 483.9L551.6 484.6L552.2 486.7L550.8 487.5L549.4 488.2M541 508.5L541 509.9L539.9 511.4M547.4 470.6L546.7 472.5L549.9 472.5L548.3 474.8L551.1 475M543.9 471.3L545.5 471.5L546.8 472.1M543 473.5L544.2 472.5L545.6 472.4M550.6 501.9L549.6 503L550.3 504.9L549.7 506.2M544.9 469.5L546.3 468.8L547.7 469.5M551.7 499.3L549.7 499.6L549.4 501.1M551.8 485.3L551.3 486.7L550.4 488.1M552 482.7L553.3 483.3L554.4 484.2L554.5 486.1L556.4 486.2L556.1 488.5M553.3 485.3L554.1 486.4L556 486.8L554.5 489.5L557.4 489.2M553.6 495.3L553.6 496.7L551.4 497.8L554.7 499.7M543 510.5L541.5 510.9L540 511.2L538.6 511.7L538.5 513.9M550.8 482.3L551.3 484.3L549 484.4L549.6 486.5M552.8 481.4L551.7 482.8L552.6 484.2L551.4 485.7M544.5 505.7L542.8 504.4L541.7 505.8L540.4 506.8M548.7 471.3L549.3 472.9L552 471.1M539 471.2L540 472.2L539.7 474.3L541.9 474.3M550.8 472.1L552.3 471.2L553.5 474M551.6 485.9L551.4 487.6L552.3 488.7L554.1 489.4M549.1 472.2L550.8 472.8L549.1 475.5L551.3 475.8M541.5 512L539.8 510.9L538.5 511.4M540.6 471.7L542.3 472.3L540.6 475L544.1 474.5L543.4 476.6M551.7 489.5L550.3 490.5L549.7 491.8L551.8 494.1M551.6 480.5L553.8 480.2L554.6 481.4L554.6 483.4L556.4 483.6M547.4 474.9L547.7 476.3L548.6 477.4L549.4 478.6L548.6 480.5M545.4 511.4L543.7 512L542.9 509.9L541.1 510.9L539.8 510.4M549 485.4L550.4 486.5L550.2 488M548.8 505.2L548.8 506.6L548.7 508L548.2 509.4L548.3 510.8M537.4 516.4L536 516.2L534.6 516.8L533.2 516.5L532.1 518.9M539.2 513.1L538.5 514.7L537.1 515.1M511 511.5L509.9 512.5L508.8 513.7L507.3 513.7M510.1 511.4L508.5 512.4L507.4 510.4L505.7 512.1L504.7 509.9M522.1 517.6L520.5 517.9L519.7 516.1L517.8 517L516.3 516.9L516.2 513.4M539.8 511.7L538 512L537.4 513.3M529.5 515.8L528.7 514.5L528.1 513M522.4 515L521.5 516.5L519.9 516.4M532.8 516.6L531.1 517L531.2 518.9M538.4 515.2L538.5 516.6L537.8 517.9L538.6 519.5M512.9 511.2L511.4 511.3L510.2 510.3L508.9 509.9L507.2 510.8M515.8 509.8L515.7 508.4L514.2 507.2L515.5 505.6M531.1 515.9L529.3 517L528.9 513.7M535.3 515.4L533.5 516.8L532.6 514.3L531.5 513.3L529.4 515.8M541.8 513.9L540.3 513.1L539 513.8L537.7 515.4L536.4 515.6M541 513L539.7 514.1L538.4 514.6L536.9 514L535.2 512.2L534.2 514.9M514 512.2L514.4 510.5L512.5 509.8M519.2 511.3L517.9 512.2L516.4 511.3L515.1 513M533.6 515.6L532.7 516.8L531.6 517.7L530.3 518.2L528.6 518.3L528.1 520M512.9 508.5L511.3 508L510.3 507L510.2 505.3L510.2 503.4M514.3 513.8L514.8 511.8L511.7 512.2M540.6 512.2L541.7 513.6L538.8 515M533.2 516.9L531.2 516.9L530.5 515.6M521.1 515.6L519.9 517.3L518.6 517.7L517 516.7L515.5 515.8M514.1 514.3L514.3 512.9L513.4 511.6L511.8 510.4L513.5 508.7L514.5 507.1M517.1 512.8L517.2 510.6L515.5 510.4L514.2 509.7L514.1 507.8M513.8 507.8L512.1 506.2L513.4 505L512.9 503.5M541.7 513.5L540.2 513.9L540.5 516.2M530.5 514.8L529.8 516.5L527.6 515.1L526.9 516.9L525.7 517.7M531.4 517.6L530.9 519.1L530.1 520.4L529.2 521.6M519.6 515.9L518.1 514.9L517 517.7L515.5 517.1M519 512.4L517.8 513.4L516.5 514.1L515.1 514.7M510.6 511L509.3 510.8L507.9 510.6M513.3 510.1L512.2 511.6L510.7 511.5L509.4 511.9L507.5 509.9M512.6 509.6L511.6 508.5L511.8 506.6L509.6 506.6L510 504.5M535.6 512.2L533.5 512.7L535.1 515.1M521.7 511.9L521.5 510.4L521.9 508.6L518.2 509L519.9 506.5M538.4 515.9L538.1 517.3L538.2 518.7L536.9 520M540 514.9L538.9 516.2L541.5 517.8L541.3 519.2L541 520.6L541 522M535.7 512.6L534.6 513.9L532.5 511.7L531.5 513.4M525.2 517.1L524.3 515.5L522.4 516.6L521.7 514.4L520.1 514.8M539.9 511.5L538.5 510.9L537.1 510.8L535.7 511.1L534.2 510.5M533.9 517.1L532.2 517L531.9 515.1L531.3 513.5L530.2 512.7M502.5 495.7L502.4 494.3L500.8 493.1M503.1 503.2L502.9 501.8L501.7 500.6M502.9 476.9L503.9 474.9L506 477.7M502.7 502.1L502.9 500.6L501.9 499.4L503.2 497.7L503.4 496.3M501.3 490.6L501.2 489.2L502.3 487.5L499.8 486.6M536.5 464.1L537.8 464.7L539.2 465.6L540.6 464.6L542.1 463.5M526.6 462.8L528.8 462.3L526.3 459.5L529.7 459.6M517.9 463.6L519.3 463.3L520.9 465M528.9 462.3L530.3 461.7L531.7 461.6L533 460.9M535.5 464.4L537.3 464.9L538.2 463.7L538.6 461.3L540.4 461.8M541.1 464.3L542.6 465.9L543.7 462.8L545.4 465.1L546.5 462.6L547.8 461.9M500.9 480.2L502.8 480.1L502.5 477.7M525.1 462.1L526.3 463L527.7 463.1L528.8 464.6M504.6 473.6L505.8 472.7L507.3 472.1M502.9 479.1L502.9 477.4L504.6 476.9M504.9 504L503.8 503L503.3 501.7L503 500.1M532.5 462.6L534.2 462.5L534.9 464.1L536.5 464.2M519.9 501.7L520.5 503L521.8 503.4L523.8 503L523.8 505.1L523.8 507.2L526.7 505.6M533.2 495.3L534.6 495.8L534.3 497.8L534.6 499.3L535.2 500.5L536.5 501.1L539.1 500.5M529.5 506.9L531.5 506.9L530.1 509.7L531.4 510.4L531.2 512.2L533.9 511.7L533.1 514M536.7 505.4L538.8 505.1L537.5 508.5L540.5 507L540.2 509.4L541 510.4L542 511.2" stroke="#5f9628" stroke-width=".72" stroke-linejoin="round"/>
<path d="M665.2 551.7L665.7 553.5L665.2 556.1L664 558.1L663.4 559.7L662.9 560.9L661.5 564L660.7 564.4L658.9 567.3L658.2 567.8L657.4 569L655.2 570.2L653.3 570L650.2 571.2L648.7 571.3L647.3 572L645.9 572L643.7 571.2L641.2 571.6L639.2 570.4L637.8 570L635.1 569.1L634.2 567.5L632 566L631.2 565.6L629.9 564.5L628.8 561.4L628.5 559.9L627.9 557.7L626.5 556.3L626.1 554.8L626.2 552.2L626.5 550.5L626.6 547.5L627.5 546.3L628.8 544.6L629.3 542L629.4 541.4L631.5 539.6L633 538.8L633.8 537.8L636.4 536.1L637.2 535.6L640 534L641.2 534.1L643.8 533L645.7 532.5L646.8 533.2L649.7 533.4L650.4 532.8L652.1 534.4L654.4 535.2L656 535.5L657.4 537.4L659.4 538.5L661.5 539.6L662.2 541.4L662.8 542L664.6 545L665.3 547L664.9 548.3L664.9 550.7L665.2 551.7M658.1 543.4L659.9 543.1L660.9 544.2M656.1 539.9L657.5 539.6L658.4 538L659.8 537.8M661.3 547.4L662.1 549.1L663.9 548.5L665.1 549.1M654.8 540.6L655.9 541.7L657.7 540.6M655 535.6L656.1 536.4L658 536.1M665.1 554.5L664.3 555.8L663.1 556.5M659.4 540.2L660.6 541L661.7 541.9L661.4 543.9M653 569.6L651.8 568.6L650.1 569.4L648.9 568.4M659.8 548.2L661.3 548L662.4 549.3M653.2 567.2L652.5 565.6L650.6 566.2L649.2 565.8M658.6 543.8L659.6 545.2L661 545.5M663.5 552.3L662.4 553.2L661.1 553.9M659.7 564.1L658.3 564.8L658.3 566.6M660 565.5L658.4 566.2L658.1 567.6M657 542.4L658.4 543.3L659.9 541.8L661.2 543.5M652.8 568.6L652.3 570.2L651.5 571.3M653.1 568.4L651.9 569.1L650.2 568.6L648.9 569.2M658.5 543.2L659.6 544L661.2 543.9M660.7 550.2L659.9 551.3L658.7 552.1M654.9 566.1L653.6 565.6L652.3 565.1M653.6 537.8L655.1 538.2L656.2 536.4M663.9 552.1L663.7 553.5L663.5 554.8M657.2 562.1L656.5 563.4L654.6 563.4M663.1 553.5L662.3 554.7L661.2 555.6L660.6 556.8M663.7 553.7L663.8 555.1L662.7 556.5M662.3 561.6L660.9 561.5L659.4 560.7M655.9 563.6L656.9 565L656.5 566.4M656.1 537.9L657.3 539L656.5 540.8L657.1 542M659.1 539L657.7 540.1L658.7 541.8M665.3 552.7L664.4 553.8L663.3 554.7M660.4 547.4L662.2 547.6L662.2 549.6L663.3 550.4M653.3 538.3L655.1 538.5L654.6 541M660.4 565.1L661.7 566.3L660.1 567.9M659.1 545.3L659.3 546.9L661.3 547.1L662.4 548.1M654.8 567.1L653.5 568.3L652 566.9M660.5 550.5L658.9 550.9L659.1 553.1M655.3 563.7L653.8 563.9L652.5 563.2M653.8 565.9L654.1 567.4L654 568.9M656.6 542.5L658 542.2L659.2 543.5M661.1 545.1L662.8 544.6L663.9 545.7M654.2 536.4L655.4 537.1L655.9 538.8M657.7 538.2L658.4 539.6L660.2 539.4M663.7 553.5L662.1 553.3L661 554.2M661.2 558.2L662.1 559.6L662.2 561M658.7 561.3L658.1 562.8L658.2 564.2M660.1 559.1L660.4 560.5L661.3 561.8M661.5 551.1L660.3 551.8L659.6 553.3L657.5 552.7M660.7 546.1L662.1 546.1L663.5 546.3M659.3 542.1L660.5 540.9L662 541.4M653.3 540.1L654.7 540.4L656.1 540.4M639.1 569.1L638 568.2L637 567.2L637.3 565.1M652.1 569.6L650.7 568.9L649.3 568.8M641.6 570.2L640.8 569L639.9 567.9M637.1 568.7L637.6 567.1L636.6 566M640.8 568L639.9 569.2L639.3 570.5M637.6 567.9L636.9 566.6L635.6 566M655.2 568.5L653.8 568.4L652.4 568M653.9 569L653.6 570.4L651.9 571M650.9 570.1L649.7 569.3L648.9 568.1M640.3 570L638.6 570.1L637.5 569.2M649.9 570.3L649.5 572.1L648.3 572.9M649.5 570.1L648 570.3L646.8 569.5M645.2 569.7L644.8 571.2L642.4 570.9L641.5 572M654.3 567.6L652.9 567.4L651.5 567.6L650.1 567.4M636.3 565.6L635.4 564.6L635.2 562.8M652.6 569.8L651.1 569.8L650.2 571.4L648.3 570.3M644.9 568.1L644.3 569.3L643.8 570.7M651.8 568.2L651.6 570.1L649.4 569.7L648.2 570.5M653 570.1L651.6 570.5L650.2 570.1L648.8 570M634.6 566L633.1 566L631.6 566M653.3 569.6L652.8 571.1L651.9 572.1L650.5 572.8M650.9 568.7L650.3 567.2L649 566.6L648.4 565.2M635.7 566.7L635.6 565.2L634.3 564.2M639.1 569L637.6 568.1L636.3 570.1M645.1 569.2L643.4 568.7L642.7 570.9L641.1 570.5M648.7 569.9L647.8 571.1L646.4 571.6M636.4 567L635 565.8L633.6 567.2L632.2 568M650.5 567.7L649.8 569L648.6 569.8M642.8 571L641.6 570.2L640.7 569.1M628.4 548L628.3 546.2L625.9 546.5M630.8 541.5L632.1 540.8L633.5 540.5M628.6 546.7L630.1 547.3L631 544.9L632.3 544.6M639.7 534.4L640.5 532.7L642.1 533M651.7 534.3L652.9 535.2L653.9 536.3L654.4 537.6M631.4 540.7L632.8 541.1L634.1 541.5L635.6 540.9M633.3 540.2L634.8 541L636.1 540M628.2 551.9L628 550.4L626 549.9M631.5 563.8L630.2 562.9L630.4 561.2M634 565.9L633 564.8L632.3 563.5L630.6 563.4M628.3 555.6L629 554.3L629.6 552.8M640.5 560.6L641.2 561.8L642.6 562.2L643.9 562.7L644.1 564.4M649.5 556.3L650.9 556.9L652.1 557.6L652.2 559.2L652.8 560.3M647 564.1L648.5 564.5L648.2 566.6L649.2 567.4L650.5 567.9M651.9 563.1L652.2 564.9L654.3 564.2L654.5 566.1L656.5 565.5" stroke="#5f9628" stroke-width=".72" stroke-linejoin="round"/>
<path d="M650.4 415.4L650.6 418.4L649.9 420.1L648.5 422.4L646.3 423.3L643.2 424.7L642.5 425.8L639 425.1L638.1 424.8L635.6 423.7L632.5 421.3L631.8 419L630.8 417L630.5 416.3L630.8 414L632.3 411.3L633.2 408.6L636 407.1L636.5 406L639.9 405.6L641.1 405.1L645.4 406.6L647 407.5L648.5 408.7L649.6 411.1L650.4 412.7L650.4 415.4M640.8 415.5L639.3 414.2L637.8 413.9L636.3 414.9L634.8 416.5L633.3 414.1L631.8 413.9M636.8 415.5L635.6 416.3L635.5 417.7M636.8 415.5L636.2 414.3L634.5 413.9M634.8 415.5L633.3 416.1L634.2 418.2M634.8 415.5L634.7 414.1L632.7 413.7M632.8 415.5L631.7 416.2L631.3 417.8M632.8 415.5L632.2 414.3L631.4 413.3M640.8 415.5L640.1 414.2L638.4 413.6L636.5 413.2L635.8 411.8L635.1 410.4L635.2 408.4M638.3 412.4L637.1 413.3L635.8 413.1M638.3 412.4L638.7 411.1L640 410.4M637 410.8L635.7 410.6L634.5 411.2M637 410.8L637.9 409.7L636.9 408.1M635.8 409.3L634.3 408.6L633.5 411M635.8 409.3L635.3 407.9L635 406.6M640.8 415.5L641.3 414L639.2 412.5L639 411L642.4 409.5L640.2 408L640.7 406.5M640.7 411.5L639.4 411.1L638.5 410.1M640.7 411.5L641.8 410.7L642.1 409.2M640.7 409.5L639.2 409.1L638.6 407.8M640.7 409.5L641.9 409.2L643.5 409.6M640.6 407.5L639.2 407.2L638.9 405.5M640.6 407.5L642.4 407.5L642.2 405.4M640.8 415.5L641.4 413.9L642.7 413.1L645.4 414.2L646.8 413.5L646.9 411.2L647.3 409.2M644 413.1L643.2 411.6L644.1 410.4M644 413.1L645.1 413.9L646.1 414.9M645.6 411.9L645 410.7L645.6 409.3M645.6 411.9L646.7 412.8L648.3 411.8M647.2 410.7L645.7 409.8L646.8 408.1M647.2 410.7L648.3 411.7L649.9 410.4M640.8 415.5L643.1 414.5L643 417.8L644.4 418.4L646.1 418.4L648 418L648.9 419.4M644.3 417.4L645.2 416.2L646.3 415.5M644.3 417.4L644.1 418.7L644.8 420M646.1 418.4L647.4 418L647.9 416.3M646.1 418.4L645.9 419.7L647.3 420.9M647.8 419.3L649.4 419.8L650.3 418.6M647.8 419.3L648.4 420.5L648.6 421.8M640.8 415.5L639.8 417.3L643.1 418L643.7 419.4L642.5 421.3L644.5 422.3L644.3 423.9M641.8 419.4L643.4 419.2L643.8 421.1M641.8 419.4L641 420.4L639.5 421.1M642.3 421.3L643 422.6L644.4 422.9M642.3 421.3L640.6 421.8L640.4 423.2M642.7 423.3L643.5 424.7L645.5 423.4M642.7 423.3L641.2 423.4L641.4 425.7M640.8 415.5L639 415.9L637.6 416.6L638.4 419.4L636.1 419.3L634.9 420.3L635.2 422.6M638.1 418.5L639.4 419.8L638.1 421.1M638.1 418.5L636.7 419.3L635.6 417.8M636.8 420L636.8 421.3L636.7 422.6M636.8 420L635.5 421.2L634.1 419M635.4 421.4L635.7 422.7L637.6 423.4M635.4 421.4L634.3 420.1L632.9 420.4" stroke="#5f9628" stroke-width=".9" stroke-linejoin="round"/>
<path d="M463 449.9L462.8 454.1L461.5 455.6L460.6 456.5L458.1 458.9L455.3 460L454.8 460L451.1 460L449.5 459.8L447.1 458.5L446 457.7L444.3 455.6L443.4 452.2L442.7 450.2L442.8 448.4L444.1 446.2L445.8 443.7L447.4 442.8L449 441.4L452.2 441.1L454.2 441.2L455.3 441.2L457.5 442.1L460.4 444.5L461.8 445.5L462.7 448.1L463 449.9M452.9 450.6L451.5 451.5L450.7 452.8L452.3 455.5L451.3 456.6L450.7 458L448.9 458.7M450.9 454L450.9 455.7L451.7 456.7M450.9 454L449.5 453.9L448.2 454.1M449.9 455.8L449.9 457.3L452.1 457.4M449.9 455.8L448.4 455.4L447.2 455.8M448.8 457.5L449.7 458.5L449.5 460.2M448.8 457.5L447.3 456.7L446.1 457.2M452.9 450.6L452.1 452.7L450 451.5L448.4 451.5L447.5 453.2L446.5 454.9L444.8 454.6M449.1 452L450.1 453.4L447.7 454.5M449.1 452L447.6 452.1L446.4 451.7M447.3 452.7L446.2 454L447.7 455.3M447.3 452.7L446.2 451.8L445.3 450.8M445.4 453.4L444.5 454.3L443.3 455.2M445.4 453.4L444.4 452.5L443.6 451.3M452.9 450.6L451.1 450.7L450.6 448.6L449.1 448.2L447.7 447.6L446 447.6L445.9 444.7M449.4 448.7L448 448.7L446.6 448.6M449.4 448.7L448 447.6L448.2 446.2M447.6 447.7L446.6 448.9L445.3 449.3M447.6 447.7L447.1 446.5L447 445.2M445.9 446.7L444.5 447L443.4 447.6M445.9 446.7L446.1 445.4L445.5 444.2M452.9 450.6L452.8 449.1L451.6 447.8L452.6 446.1L452.5 444.5L450.3 443.5L450.7 441.9M452.1 446.7L450.7 446.6L449.2 446.7M452.1 446.7L453.8 446.2L453.9 444.7M451.6 444.7L450.6 443.8L449 444.2M451.6 444.7L453.4 444.7L454 443.5M451.2 442.8L450.5 441.1L449.3 440.7M451.2 442.8L451.6 441.5L452.4 440.5M452.9 450.6L454.3 449.8L453.9 447.4L456.7 448L458 447.1L456.7 443.9L459.6 444.5M455.6 447.7L455.8 446.3L455.9 445M455.6 447.7L456.5 448.8L458.2 448.2M457 446.2L455.7 445.2L456.7 443.5M457 446.2L458.3 445.7L459.6 445.7M458.3 444.7L459 443.4L457.1 442.2M458.3 444.7L459.6 443.9L460.9 443.8M452.9 450.6L454.3 451.3L455.6 452L456.9 453.3L458.8 451.9L460.6 450.7L461.9 451.6M456.8 451.6L458.1 451.2L459.5 450.7M456.8 451.6L457.9 452.6L457.5 454.1M458.7 452.1L459.2 450.8L461.2 450.7M458.7 452.1L458.7 453.4L459.2 454.7M460.6 452.6L461.3 451.1L462.3 450.3M460.6 452.6L460.5 454L460.2 455.5M452.9 450.6L451.8 452.8L454.6 453.1L456.3 453.9L457.2 455.1L457.1 456.9L456.9 458.7M454.7 454.2L456 453.5L457.2 453.2M454.7 454.2L454.2 455.4L453.1 456.2M455.6 455.9L456.6 457.2L457.8 457.8M455.6 455.9L454 456.4L454.5 458.3M456.5 457.7L457.9 457.7L458.6 459.7M456.5 457.7L456.7 459.2L456.2 460.5" stroke="#5f9628" stroke-width=".9" stroke-linejoin="round"/>
<path d="M491.6 447.8L491.3 450.3L491.1 451.9L489.5 454.3L487.4 455.4L485.5 457L482.7 457.9L481.5 457.4L477.9 456.2L476 455.7L474.6 454.1L473.4 452L472.6 449.5L471.9 447.1L472.4 446.1L473.5 442.5L474.9 440.4L476.2 439.5L477.5 438.1L481 437.8L483.1 437.4L485.4 438L488.5 439.7L490 440.9L491.3 443.8L491.7 445.4L491.6 447.8M482 447.5L480.5 448L478.6 447.8L478 449.6L476.9 450.7L474.7 450.1L474.5 452.4M478.7 449.7L477.4 450.9L477.3 452.2M478.7 449.7L477.2 450.6L476.3 448.3M477 450.8L477.5 452.1L478.1 453.3M477 450.8L476.3 449.2L474.4 450.4M475.4 452L474.9 453.2L475.9 454.6M475.4 452L473.8 452.4L472.9 451.2M482 447.5L480.3 449L479 447.6L477.4 448.4L475.9 448.4L474.4 448.1L473 446.9M478 447.1L476.7 447.6L476.3 449M478 447.1L476.6 446.5L476 445.3M476 446.9L475.9 448.4L474.6 449.1M476 446.9L476.4 445.4L475 444.5M474 446.7L473 447.6L473.3 449.3M474 446.7L472.5 446.3L472.9 444.2M482 447.5L482.5 445.5L482.2 444L481.3 442.8L479 442.3L476.6 441.9L476.8 440.1M480.1 444L478.9 443.3L477.7 442.8M480.1 444L481.3 443.3L482.6 442.7M479.1 442.3L477.8 442.3L476.5 441.3M479.1 442.3L480.2 441.3L480.5 440M478.1 440.5L476.9 441.7L475.6 441.5M478.1 440.5L478.2 438.9L479.6 438.4M482 447.5L482.6 446.1L484.7 445.5L485.7 444.3L484.2 441.9L484.1 440.2L487.6 440.3M483.8 443.9L482.7 443.1L481.8 442M483.8 443.9L485.1 443.6L486 442.4M484.7 442.2L485.1 440.5L483.5 439.9M484.7 442.2L486.1 441.1L487.3 443M485.7 440.4L485.9 438.6L483.2 438.9M485.7 440.4L487 440.3L488.3 440.3M482 447.5L483.2 446.2L485.3 448.3L486.7 447.8L488 446.8L489.7 447.4L490.8 445.5M485.9 446.5L487 445.7L486.4 443.8M485.9 446.5L486.5 447.7L488.2 447.9M487.8 446L487.5 444.3L488.4 443.4M487.8 446L489.2 446.6L488.5 448.7M489.8 445.5L490.1 444.2L491.1 443.3M489.8 445.5L490.1 447.3L492.3 446.5M482 447.5L483.9 447.5L485.3 448.1L485.1 450.8L487.2 450.6L488 452L488.7 453.6M485.2 449.9L486.4 448.7L487.8 450.2M485.2 449.9L486 451.5L484.6 452.5M486.8 451.1L488.3 451.2L489.7 450.9M486.8 451.1L485.5 452.4L487.8 453.8M488.4 452.4L489.9 452.9L490.8 451.4M488.4 452.4L488.5 453.7L488.7 455M482 447.5L480 448.8L482.7 450.6L482.2 452.1L480.1 453.3L480.2 454.8L479.8 456.3M481.6 451.5L482 453.1L483.1 453.7M481.6 451.5L480.6 452.5L479.7 453.6M481.3 453.5L482 454.9L483 455.7M481.3 453.5L479.9 453.7L478.6 454.1M481.1 455.5L482.9 455.7L483.4 456.9M481.1 455.5L479.8 455.9L478.5 456.4" stroke="#5f9628" stroke-width=".9" stroke-linejoin="round"/>
<path d="M520.1 436.7L519.4 439.8L518.6 440.4L517.7 442.8L514.4 445.4L514.2 446.1L511.4 446.2L509.5 447.1L507 446.2L504.1 444.7L502.5 443.4L500.3 441.1L499.8 438.5L499.6 436L500.1 434.8L501.2 431.2L502 430.1L503.6 429.1L507.2 427.4L509.3 426.4L511.3 426.9L513 427.6L514.9 428.8L516.2 429.7L518.3 431.1L519.7 434.8L520.1 436.7M509.6 436.8L511 437.3L512.4 438.4L513.9 438.4L515.7 437L517 438.2L518.4 438.7M513.5 437.5L515.1 437.2L515.4 435.6M513.5 437.5L515 438.3L514.5 439.9M515.5 437.8L516.8 437.4L518.2 437.2M515.5 437.8L515.9 439L516.3 440.3M517.5 438.1L518.3 437.1L519.7 436.7M517.5 438.1L518.3 439.2L518.5 440.5M509.6 436.8L510.5 438L511.2 439.4L513.2 439.6L513.2 441.6L513.8 443.2L515.8 443.4M512.4 439.7L513.4 438.7L515.2 439.7M512.4 439.7L512.7 441L511.5 442.3M513.8 441.1L515 441.5L516.3 442.3M513.8 441.1L512.8 442.1L513.1 443.7M515.2 442.5L516.5 442.8L517.7 441.2M515.2 442.5L514.3 443.9L515 445.2M509.6 436.8L509.8 438.3L510.3 439.8L507.9 441.2L510.1 442.8L508.3 444.2L508.1 445.7M509.4 440.8L510.7 441.2L511.2 442.6M509.4 440.8L508.2 441.3L507.5 442.6M509.2 442.8L510.5 443.3L512 443.3M509.2 442.8L507.6 442.4L506.7 443.4M509.1 444.8L509.6 446.3L510.5 447.3M509.1 444.8L508.2 445.7L508.2 447.5M509.6 436.8L508.9 438.5L507.1 438.5L505.4 438.5L503.7 438.7L503.7 441.5L502.9 443.1M506.2 438.9L505.7 440.3L506.5 441.5M506.2 438.9L504.7 439.7L503.9 437.2M504.5 439.9L503.5 441.1L503.6 442.5M504.5 439.9L503.7 438.6L501.9 439.1M502.8 440.9L502.7 442.3L501.6 443.4M502.8 440.9L502 439.7L500.7 439.4M509.6 436.8L507.7 437.3L507.1 435L505.7 434.4L504.1 434.4L503.1 433L502.1 431.5M505.9 435.2L505.7 436.8L504.4 437.4M505.9 435.2L506.2 433.8L505 432.7M504.1 434.4L503.2 435.4L501.7 435.7M504.1 434.4L503 433.5L501.9 432.6M502.3 433.6L501.2 434.4L499.5 434.3M502.3 433.6L501.6 432.4L501.5 431.1M509.6 436.8L508 435.7L507.2 434.4L508.8 432.3L507.1 431.3L507.2 429.7L507.7 428M508.4 433L507.2 432.6L505.8 432.3M508.4 433L509.5 432.1L508.9 430.2M507.8 431.1L506.2 431.6L505.5 429.7M507.8 431.1L509.5 430.6L509.1 428.8M507.2 429.2L506 428.8L504.9 427.7M507.2 429.2L508.4 428.5L508.1 426.4M509.6 436.8L511.2 436L510.7 434L513.4 433.8L513 431.8L514.3 430.8L514.8 429.4M511.5 433.3L511 432L510.8 430.6M511.5 433.3L512.7 432.5L513.9 431.9M512.5 431.5L513 430L512 428.9M512.5 431.5L513.3 429.9L514.9 430.6M513.4 429.8L512.5 428.8L511.1 428M513.4 429.8L514.9 430.4L516.1 429.7" stroke="#5f9628" stroke-width=".9" stroke-linejoin="round"/>
<path d="M643.3 443.9L643 444.8L641.4 448L641.4 448.9L637.6 451.4L636 452.1L633.7 452.8L631.4 453.3L629.8 452.4L626.9 451.1L625.5 449.6L624.3 448.2L623.5 445.2L623.3 442.8L623.1 439.8L624.2 438.6L624.9 436.4L626.3 434.8L628.2 433.8L632.4 432.8L634.4 433.1L637.7 433.8L638.4 435.1L639.9 436.5L641 437.8L642.4 439.6L643.3 443.9M632.9 443L631.7 441.1L634.2 440.3L635 438.9L635.1 437.4L635.3 435.9L635.6 434.4M634.1 439.2L632.8 438.6L632.9 436.7M634.1 439.2L635.5 439.8L636.8 439.6M634.6 437.3L633.7 436.3L632.8 435.5M634.6 437.3L636 437.2L636.9 435.5M635.2 435.3L633.7 435.1L633.2 433.7M635.2 435.3L636.1 433.9L637.7 434.6M632.9 443L634.7 443.9L635.9 442.7L637.1 441.2L638.8 441.8L640.6 443L641.8 441.4M636.8 442L635.8 440.5L637.8 439.6M636.8 442L638.4 442L639.2 443.1M638.7 441.6L638.5 439.9L639.4 439M638.7 441.6L640.2 441.7L640.5 443.6M640.7 441.1L640.7 439.6L641.2 438.3M640.7 441.1L642.1 441.4L642.6 442.9M632.9 443L634.8 442.7L635.5 444.4L637.7 443.7L637.4 447.3L639.3 446.9L640.9 447.1M636.4 445L638.1 445.4L638.7 443.8M636.4 445L637.3 446.1L637.1 447.5M638.1 446L639.4 445.5L640 444.1M638.1 446L638.9 447.3L638.2 448.6M639.9 446.9L641.5 447.2L642 445.5M639.9 446.9L640.2 448.2L640.9 449.3M632.9 443L633.8 444.3L632.1 446.3L635.8 446.9L635.6 448.5L636 450L633.9 452M633.9 446.9L634.8 447.9L636 448.5M633.9 446.9L633.4 448.1L633.6 449.7M634.3 448.8L635.6 449.1L636.9 449.1M634.3 448.8L632.8 449L633.1 451.4M634.8 450.8L636.1 451.1L637.2 451.8M634.8 450.8L634.1 451.9L632.2 452M632.9 443L630.6 442.5L630.2 444.5L630 446.6L628 446.4L627.8 448.7L625.6 448.2M629.7 445.4L628.4 446.6L629.9 448.1M629.7 445.4L628.2 445.5L627.1 444.9M628.1 446.7L627.2 447.9L627.1 449.2M628.1 446.7L627 446L625.4 446.5M626.6 447.9L627.7 449.3L625.2 450.4M626.6 447.9L625.3 447.2L623.8 448.9M632.9 443L631.4 442.5L629.8 444L628.3 444.3L627.1 440.9L625.4 443.2L623.8 444.2M628.9 442.7L627.1 443L627.3 444.7M628.9 442.7L627.9 441.9L627.3 440.6M626.9 442.5L626.1 443.5L624.6 443.8M626.9 442.5L627.1 440.9L626.8 439.6M624.9 442.3L623.1 442.5L624 444.9M624.9 442.3L624.7 441L624.6 439.5M632.9 443L631.9 441.8L632.8 439.6L630.6 439.1L628.4 438.6L629.1 436.6L627.7 435.6M630.9 439.5L629.7 438.7L628.3 440.6M630.9 439.5L632.4 438.6L632.6 437.3M630 437.8L628.7 438.1L627.3 436.7M630 437.8L631.4 437.2L631.5 435.7M629 436L627.6 436.9L626.3 437.1M629 436L628.1 434.5L629.5 433.5" stroke="#5f9628" stroke-width=".9" stroke-linejoin="round"/>
<path d="M636.4 473.2L635.7 477.1L634.4 478.7L633.9 479.5L631.1 482L629.1 482.7L628 483.3L625.1 483.5L621.6 482.5L620.7 482.5L618 480.3L616.4 477.7L616.4 476.6L615.6 472.3L616 472.1L617.2 468.2L619.1 465.9L620.6 464.7L622.6 464.3L625.4 463.6L628 463.7L629.8 464.3L632.5 465.4L634.1 467.1L634.4 469L635.4 470.7L636.4 473.2M626 473.6L624.5 472.1L623 471.8L621.5 473.3L620 475.6L618.5 474.9L617 475.4M622 473.6L621.9 475L620.4 475.8M622 473.6L621.4 472.5L621.1 471M620 473.6L620.3 475.3L618.4 475.7M620 473.6L620.1 471.9L617.9 472M618 473.7L616.3 473.9L616.4 475.7M618 473.7L617.6 472.2L616.8 471.1M626 473.6L624 473.5L624.9 470.5L622.3 470.9L621 470.1L619.4 469.7L620.6 466.2M623.1 470.8L621.9 471.8L620.6 471.3M623.1 470.8L624.7 469.9L623.1 468.1M621.7 469.4L620.6 470.3L619 469.1M621.7 469.4L622.4 468.2L623 467M620.3 468L619 468.3L618 469.8M620.3 468L620.8 466.7L620.9 465.4M626 473.6L624.4 471.9L627.4 470.8L628 469.3L628.2 467.8L628 466.3L627.9 464.8M626.5 469.6L625.4 468.9L624.2 468.3M626.5 469.6L627.6 468.7L629.2 469.3M626.8 467.7L625.5 467L624.3 466.3M626.8 467.7L628.3 467.5L629.4 466.9M627.1 465.7L625.3 466L625.1 463.9M627.1 465.7L628.1 464.8L629.9 465.6M626 473.6L627 472.2L629.3 473.3L629.8 471.3L631.2 470.6L632.6 469.9L633.9 469.2M629.5 471.7L630.8 470.8L630 469.1M629.5 471.7L631 471.5L631.8 472.9M631.3 470.7L630.6 469.1L631.4 468M631.3 470.7L632 471.9L633 472.8M633 469.8L633.3 468.5L634.5 467.5M633 469.8L634.2 470.4L635.8 470.3M626 473.6L626.9 475.7L628.5 475.9L630.2 475.3L631.9 474.7L633.1 476.1L634.6 476.4M629.8 474.7L631.4 474.6L632 473.3M629.8 474.7L630 476.1L630.7 477.2M631.8 475.3L633 474.7L634.6 475.2M631.8 475.3L631.7 476.6L632.5 477.8M633.7 475.8L635.5 476.1L635.4 473.8M633.7 475.8L635.1 476.7L634.6 478.3M626 473.6L625.7 475.3L625 477L628.2 477.7L628.8 479L628.6 480.7L629.1 482.1M627.1 477.4L628.5 476.9L629.7 477.7M627.1 477.4L626.2 478.4L625.1 479.1M627.7 479.4L629 479.4L630.2 479.9M627.7 479.4L627.5 481.2L626.5 481.9M628.2 481.3L629.4 482.1L630.8 481.6M628.2 481.3L627.5 482.4L627.1 483.7M626 473.6L625.7 475.2L624.2 476L624.3 477.8L622.7 478.6L623.8 481L619.8 480.4M624 477.1L624.3 478.3L624.8 479.6M624 477.1L622.4 476.2L621.5 477.9M623 478.8L623.8 479.9L624.4 481.1M623 478.8L621.6 477.6L620.3 477.8M622 480.5L621.8 481.9L622.6 483.1M622 480.5L620.6 481.4L619.3 481.6" stroke="#5f9628" stroke-width=".9" stroke-linejoin="round"/>
<path d="M643.1 507.4L641.8 509.6L642.5 510.2L640.1 513.8L637.5 514.9L636.5 515.6L633.7 516.5L632.2 516.6L630.2 516L627.4 514.5L626 513L624.2 511.9L623.6 509.8L622.7 507.4L623.7 503.5L624.2 501.7L625.3 499.7L626.6 498.7L628.8 497.7L631.3 496.8L633.4 496L635.8 497.2L639 498.9L641.2 500L642.2 501.7L642.5 503.7L643.1 507.4M632.9 506.4L631.5 505.6L630.1 504.6L628.5 505.3L626.8 507.2L625.5 505.3L624 504.6M628.9 506L628.9 507.7L628 508.7M628.9 506L628.8 504.6L627.7 503.7M626.9 505.8L626.1 506.8L624.8 507.4M626.9 505.8L626.8 504.2L625.8 503.3M624.9 505.6L624.3 506.9L623.2 507.6M624.9 505.6L624.8 504.2L622.9 503.6M632.9 506.4L631.6 505.4L633 503.1L630.2 502.7L628.9 501.6L629.1 499.9L629 498.3M631.2 502.8L630 502.4L628.5 503.2M631.2 502.8L630.6 501.1L633.4 500.9M630.4 501L629 501.2L627.7 501.3M630.4 501L630 499.2L631 498.3M629.5 499.1L628.3 498.9L627 498.3M629.5 499.1L630 497.8L631.7 497.6M632.9 506.4L634.8 505.7L634.4 503.8L636 502.9L634.1 500.2L635.4 499.2L637.4 498.6M634.8 502.9L634.4 501.6L633.4 500.7M634.8 502.9L635.9 502L637 501.2M635.7 501.1L634.5 500.4L635 498.5M635.7 501.1L637 500.7L638.4 501.1M636.7 499.4L635.5 498.6L634.2 498M636.7 499.4L638 498.9L639.2 500.5M632.9 506.4L634.2 505.6L636.2 506.8L636.7 503.5L639.1 505.9L639.8 503.3L641.8 504.7M636.7 505.2L637.7 503.9L636.5 502.5M636.7 505.2L637.5 506.2L638.8 506.8M638.6 504.6L638.1 503L639.9 502.3M638.6 504.6L639.6 505.4L640.2 506.9M640.5 503.9L639.8 502.3L641.6 501.6M640.5 503.9L641.6 504.7L642.8 505.1M632.9 506.4L633.8 507.8L636.3 506.6L637 508.4L638.6 508.7L639.8 509.5L641.3 510M636.3 508.6L637.7 509.2L639.1 509.2M636.3 508.6L635.5 509.9L637.5 511.2M637.9 509.7L639.3 509.8L640.7 509.9M637.9 509.7L637.1 511.3L637.4 512.5M639.6 510.7L640.9 510.3L642.4 511.4M639.6 510.7L640.6 511.9L639.7 513.4M632.9 506.4L631.9 507.9L634.1 509.4L633 510.9L634.3 512.4L631.4 513.9L631.5 515.4M633 510.4L634.6 510L635.7 510.5M633 510.4L631.9 511.1L630.3 510.8M633.1 512.4L634.8 512L635.8 512.8M633.1 512.4L632.3 513.6L631 513.9M633.1 514.4L634.8 514.1L635.9 514.8M633.1 514.4L632.9 516.2L631.3 516.3M632.9 506.4L633 508.6L632 509.7L629 508.9L628.2 510.2L627.7 511.8L626.7 513M630.1 509.3L630.7 510.4L631.9 511.4M630.1 509.3L628.8 509.1L627.6 508.7M628.7 510.7L628.8 512L630.1 513.2M628.7 510.7L627.7 509.4L626.3 509.5M627.3 512.1L626.6 513.8L628.2 514.6M627.3 512.1L626.1 511.3L624.6 512.5" stroke="#5f9628" stroke-width=".9" stroke-linejoin="round"/>
<path d="M538.3 543.4L538.7 546.1L537.6 547.4L535 550.4L534.9 551.3L531.7 552.8L530.4 553.4L528.2 553L524.1 552.2L523.5 552.1L521.9 550.5L520.1 547.7L519.4 546L518.9 543.4L518.4 541.4L519.5 538.7L521 537.1L523.5 534.3L525.9 533.3L526.9 533.1L529.9 533.6L532.8 534L535.1 535.1L536.7 536.6L537.9 539.1L538.5 541.5L538.3 543.4M528.6 543.2L527.4 544.3L526.8 545.6L526.3 547.1L525.9 548.6L524 549.2L523.4 550.6M526.6 546.6L526.4 548.4L529.1 548M526.6 546.6L525.2 546.2L524 546.9M525.5 548.4L526.7 549.2L527 550.5M525.5 548.4L524.3 547.8L523 547.1M524.5 550.1L524.4 551.8L525.3 552.7M524.5 550.1L523.4 548.9L522.1 548.7M528.6 543.2L527.2 543.8L525.7 543.8L524 542.7L522.4 542.1L521.1 543.5L519.7 544.6M524.6 543.7L524.5 545.3L523.8 546.4M524.6 543.7L522.8 543.9L522.4 542.3M522.6 543.9L521 544.4L521.9 546.6M522.6 543.9L522.2 542.3L521.2 541.5M520.7 544.2L520 545.3L519.8 546.7M520.7 544.2L519.3 543.7L518.1 543.1M528.6 543.2L529 541.1L528.2 539.9L525 540.2L525.8 537.9L523.1 537.9L524.4 535.2M526.4 539.8L525.2 539.2L523.7 540M526.4 539.8L528.1 539.4L527.8 537.6M525.3 538.2L523.9 537.6L522.9 539.4M525.3 538.2L526.9 537.6L526.2 535.6M524.3 536.5L523 537L521.7 537.8M524.3 536.5L523.8 534.9L525.9 534.3M528.6 543.2L527.9 541.5L528.9 540.2L527.9 538.4L529.3 537.2L530.6 536L531.8 534.7M529.5 539.3L528.6 538.3L527.2 537.9M529.5 539.3L530.8 539.2L532.2 539.5M529.9 537.3L529.9 535.7L527.6 535.8M529.9 537.3L530.7 536.1L532.1 535.9M530.3 535.4L530.2 533.7L527.6 534.4M530.3 535.4L531.3 534.2L533 535.2M528.6 543.2L530.8 544.3L532.1 543.6L532.9 541.8L533.6 539.8L535.8 540.8L536.7 539.2M532.2 541.5L531.6 539.9L534 539.3M532.2 541.5L533.8 541.3L534.9 542M534 540.6L533.4 539L535.5 538.4M534 540.6L535.4 540.8L536.5 541.5M535.8 539.8L536.2 538.5L536.7 537.3M535.8 539.8L537.1 539.9L538 541.5M528.6 543.2L529.9 543.9L531.5 544.1L533 544.5L534.6 544.5L535.7 545.7L537.4 545.7M532.2 544.9L533.2 543.6L535.1 545.4M532.2 544.9L533.3 546.3L532.5 547.5M534 545.8L535.1 545L536.6 545.2M534 545.8L534.5 547L535.6 548M535.8 546.6L536.5 545.2L537.9 544.9M535.8 546.6L536.7 547.8L536.4 549.2M528.6 543.2L529.2 544.6L527.8 546.4L530.8 547.3L529 549.2L528.8 550.8L528.6 552.4M529.4 547.1L530.8 547.1L531.7 548.4M529.4 547.1L528.6 548.2L527.3 548.7M529.8 549.1L531.6 548.8L532.4 550M529.8 549.1L529.5 550.8L528.1 551.1M530.2 551L531.2 552.4L532.8 551.6M530.2 551L528.6 551.3L528.8 553.3" stroke="#5f9628" stroke-width=".9" stroke-linejoin="round"/>
<path d="M516.1 564.1L516.6 565.6L515.5 567.3L514.1 569.2L511.3 571.8L510.6 572.2L506.7 573.8L505.8 573L503 573.3L500.4 571.5L499.7 570.9L497.1 567.5L496.9 566.1L496.3 562.2L496.2 561.6L497.4 558.7L499.5 555.6L501.7 554.7L501.9 554.1L506.4 553.5L507.5 553.7L509.8 553.8L511.7 554.5L514.1 556.8L515.2 559.6L516.7 561.8L516.1 564.1M506.5 563.4L506.9 564.9L506.7 566.8L510 566.5L510.4 568.1L511.8 569L509.6 572M508.5 566.8L509.8 565.9L511.1 567.5M508.5 566.8L508.3 568.1L506.9 569M509.5 568.6L510.8 568.5L512.1 568M509.5 568.6L509.3 569.9L509.4 571.3M510.6 570.3L511.8 570.8L512.8 572.1M510.6 570.3L510.2 571.6L510.5 573.2M506.5 563.4L506.5 565.1L506 566.5L503.8 567.1L502.6 568.2L504.7 570.8L504.2 572.3M504.8 567L504.1 568.7L505.7 569.5M504.8 567L503.4 567.1L502.4 568M503.9 568.8L505.4 569.7L505.1 571.2M503.9 568.8L502.6 568.9L501.4 567.4M503.1 570.6L504.1 571.6L505.1 572.5M503.1 570.6L501.9 571.7L500.4 569.8M506.5 563.4L505.7 565.7L503.5 564L502.3 565L500.6 564.9L499.3 565.6L498.6 567.9M502.7 564.8L502 565.9L503.1 567.6M502.7 564.8L502.2 563.5L500.3 563.5M500.9 565.5L500.5 566.7L499.4 567.6M500.9 565.5L499.2 565.4L499 563.7M499 566.1L499.5 567.6L498.3 568.7M499 566.1L498.3 564.9L496.3 565.3M506.5 563.4L505.3 562.1L504.3 560.6L502.3 561.7L501.3 560L499.2 561.4L497.5 561.8M502.7 562.1L502.1 563.4L500.1 563.1M502.7 562.1L501.3 561L501.8 559.6M500.8 561.5L500.7 563.2L499.4 563.8M500.8 561.5L500.6 560.1L500.6 558.6M498.9 560.8L497.3 560.9L497.5 563.1M498.9 560.8L500 559.4L499.4 558.1M506.5 563.4L505.3 562.2L507.3 560L506 558.9L504.5 557.7L503.5 556.5L502.2 555.3M505.4 559.6L504.1 559.1L502.6 560M505.4 559.6L507.1 559L507.5 557.8M504.8 557.6L503.2 557.7L503.2 555.4M504.8 557.6L506.3 557.2L506.3 555.5M504.2 555.7L503.5 554.1L501.6 555.2M504.2 555.7L505.7 555.5L505.6 553.3M506.5 563.4L508.8 563.9L507.9 560.3L510.1 560.7L511.2 559.6L511.7 557.9L514.1 558.5M509.6 560.9L510.2 559.4L509.7 558.2M509.6 560.9L510.8 561.6L511.9 562.4M511.2 559.6L511.9 558.4L511.1 557M511.2 559.6L512.5 559.9L513.4 560.9M512.7 558.4L511.8 557.1L512.6 555.8M512.7 558.4L513.8 559.2L514.7 560.4M506.5 563.4L508.2 562.2L509.5 563.9L511 563.9L512.7 562.5L513.6 566.4L515.3 565.4M510.4 564.1L511.7 563.5L512.7 562.7M510.4 564.1L509.9 565.6L511.1 566.6M512.4 564.4L513.5 563.6L513.7 562M512.4 564.4L512.8 565.8L513.6 566.8M514.4 564.7L515.3 563.7L516.2 562.7M514.4 564.7L514.8 566.1L516.2 566.6" stroke="#5f9628" stroke-width=".9" stroke-linejoin="round"/>
<path d="M502.8 589.4L502.9 591L501.3 595.1L500.5 596.2L498.9 597.9L495.7 598.9L493.3 599.2L491.6 599.8L490.4 599.2L487 597.1L485.1 596.1L484.2 593.5L482.6 591.1L482.8 589.6L483.2 587.9L485.1 584.1L485.4 583.1L488.3 580.7L489.8 579.6L491.8 579.3L494.9 579.5L495.5 579.7L498.8 581.4L501.3 583.6L502 584.5L502.8 587.8L502.8 589.4M493 589.5L491.8 590.4L490.2 590.7L488.5 590.9L488.3 593.2L486.7 593.5L486.3 595.6M489.7 591.8L489.4 593.1L489.8 594.4M489.7 591.8L488.2 592.5L487 591.7M488.1 592.9L487.2 594.1L487.5 595.5M488.1 592.9L487.5 591.3L485.5 592.1M486.4 594.1L485.6 595.2L486.1 596.6M486.4 594.1L485.2 593.5L483.8 593.4M493 589.5L492 588L490.8 587.2L489.2 586.9L488.3 585.4L486.8 585L484.1 587.4M489.4 587.9L488.5 589.4L486.7 588.1M489.4 587.9L489.6 586.5L487.8 585.5M487.5 587L486 586.6L485 587.7M487.5 587L486.1 586.2L487.3 584.3M485.7 586.2L485.4 587.8L482.9 586.9M485.7 586.2L485 585.1L485 583.7M493 589.5L494 587.6L490.3 587.2L490.7 585.5L489.8 584.2L489.2 582.8L491 580.7M491.8 585.7L490.6 585.2L489.8 584M491.8 585.7L492.8 584.8L494 584.2M491.2 583.8L489.8 584.1L488.5 583.8M491.2 583.8L491.8 582.5L493.9 582.9M490.6 581.9L489.3 581.6L488.6 580.1M490.6 581.9L492.4 581.4L492.2 579.8M493 589.5L494.4 588.7L495.9 587.9L494.4 585L496.1 584.3L496.5 582.8L497.9 581.9M495.3 586.3L494.2 585.1L495 583.7M495.3 586.3L496.5 586.9L497.8 587.2M496.5 584.6L496 583.4L495.3 582.3M496.5 584.6L497.8 584.8L499.1 583.9M497.7 583L498.4 581.6L497.3 580.4M497.7 583L499.1 582L500.2 583.4M493 589.5L494.4 587.5L496.1 591.3L497.5 588.7L499 589.3L500.5 589.7L502 589.5M497 589.4L498.7 589.1L498.2 587M497 589.4L498.8 589.2L498.3 591.9M499 589.3L499.5 588L500.9 587.5M499 589.3L500.1 590.1L500.1 591.7M501 589.2L500.8 587.6L502.8 587.3M501 589.2L501.1 590.7L501.9 591.7M493 589.5L495.2 588.7L494.9 592.3L497.4 590.8L497.3 594.1L498.6 594.9L500.2 595.1M496.5 591.4L497 589.7L499.2 590.8M496.5 591.4L495.8 592.9L495.8 594.2M498.3 592.4L499.5 591.8L500.7 591.3M498.3 592.4L497.5 594L498.5 595M500 593.4L501.5 593.4L502.4 592.3M500 593.4L500.3 594.6L500.5 596M493 589.5L491.6 590.9L493.5 592.6L492.1 593.9L491.4 595.4L492.5 597L490.2 598.3M492.6 593.5L493.4 594.5L494.5 595.2M492.6 593.5L491.1 593L489.9 593.7M492.4 595.5L493.3 596.4L494.2 597.5M492.4 595.5L491.9 597.1L490.3 597.1M492.2 597.5L493.8 597.1L494.4 598.9M492.2 597.5L492 599.2L489.8 598.7" stroke="#5f9628" stroke-width=".9" stroke-linejoin="round"/>
<g shape-rendering="crispEdges"><rect x="419" y="539" width="41" height="1" fill="#860000"/><rect x="439" y="519" width="1" height="41" fill="#860000"/></g>
<circle cx="439.5" cy="539.5" r="5" stroke="#9a0000" stroke-width=".85"/>
</g></svg>
<div style="position:absolute;left:1138px;top:155px;width:16px;height:577px;background:#fafafa"></div>
<div style="position:absolute;left:1143px;top:303px;width:8px;height:279.6px;border-radius:4px;background:#7e7e7e"></div>
<div style="position:absolute;left:72px;top:732px;width:1066px;height:16px;background:#fafafa"></div>
<div style="position:absolute;left:72px;top:732px;width:23px;height:16px;background:#ebebeb"></div>
<div style="position:absolute;left:168.6px;top:737px;width:857px;height:7.8px;border-radius:4px;background:#7e7e7e"></div>
<div style="position:absolute;left:1100px;top:733px;width:54px;height:15px;background:#ececec;font-size:13px;line-height:15px;text-align:right;padding-right:1px;color:#111">1 &lt; 10</div>
<div style="position:absolute;left:72px;top:748px;width:1082px;height:23px;background:#fff;border-top:1px solid #c8c8c8;border-bottom:1px solid #c8c8c8"></div>
<div style="position:absolute;left:77px;top:750px;font-size:13.5px;line-height:18px;color:#0c0cd0"><i>Comando:</i> blockedit</div>
<div style="position:absolute;left:72px;top:771px;width:1082px;height:27px;background:#ececec"></div>
<div style="position:absolute;left:73px;top:776px;font-size:13.6px;line-height:18px;color:#111">Comando:</div>
<div style="position:absolute;left:138px;top:774px;width:988px;height:20px;background:#fff"></div>
<div style="position:absolute;left:1127px;top:772px;width:26px;height:25px;background:linear-gradient(#e6e6e6,#f4f4f4);border:1px solid #b4b4b4"></div>
<div style="position:absolute;left:1133px;top:780px;width:14px;height:10px;background:#ededed;border:1px solid #5a5a5a;border-top:3px solid #0a0a0a"></div>
<div style="position:absolute;left:1154px;top:108px;width:1px;height:690px;background:#e6e6e6"></div>
<svg style="position:absolute;left:72px;top:108px" width="1066" height="300" viewBox="72 108 1066 300">
<path d="M1011.5 145H1023L1017.3 151Z" fill="#000"/>
<path d="M85 376.2V388L91.2 382.1Z" fill="#000"/>
<circle cx="102.2" cy="118.6" r="5.6" fill="#f4f4f8" stroke="#2c4a8c" stroke-width="1.8"/>
<path d="M99 116.4h5M99.4 119h3.2" stroke="#c8a0a0" stroke-width=".6"/>
<path d="M102 117.6L108 124" stroke="#f0a028" stroke-width="2.2" stroke-linecap="round"/>
<path d="M107.4 123.2L108.6 124.6" stroke="#e06060" stroke-width="2.2" stroke-linecap="round"/>
</svg>
<style>
.dk{position:absolute;left:1155px;width:299px}
.dt{position:absolute;left:1155px;width:299px;height:23px;background:linear-gradient(#f2f2f2,#e6e6e6 60%,#dadada);text-align:center;font-size:11.6px;line-height:21.5px;color:#222;padding-left:36px;letter-spacing:.25px}
.db{position:absolute;height:25px;border:1px solid #a6a6a6;background:linear-gradient(#e6e6e6,#f3f3f3 55%,#f8f8f8)}
.bl{position:absolute;left:1205px;font-size:13.2px;line-height:20px;color:#0c0c0c;white-space:nowrap;-webkit-text-stroke:.28px #0c0c0c;margin-top:-.5px}
.ll{position:absolute;left:1183px;font-size:13.2px;line-height:20px;color:#0c0c0c;white-space:nowrap;-webkit-text-stroke:.28px #0c0c0c;margin-top:.5px}
.sw{position:absolute;left:1161px;width:16px;height:9px;border:1px solid #111}
</style>
<div style="position:absolute;left:1155px;top:108px;width:300px;height:690px;background:#dedede"></div>
<div class="dt" style="top:108px">Lista de bloques</div>
<div style="position:absolute;left:1155px;top:131px;width:300px;height:25px;background:#ababab"></div>
<div class="db" style="left:1156px;top:131px;width:36px"></div>
<div class="db" style="left:1193px;top:131px;width:36px"></div>
<div class="db" style="left:1230px;top:131px;width:37px"></div>
<div class="db" style="left:1268px;top:131px;width:36px"></div>
<div class="db" style="left:1305px;top:131px;width:36px"></div>
<div class="db" style="left:1342px;top:131px;width:37px"></div>
<div class="db" style="left:1380px;top:131px;width:36px"></div>
<div class="db" style="left:1417px;top:131px;width:36px"></div>
<div style="position:absolute;left:1155px;top:156px;width:300px;height:152px;background:#fff;border:1px solid #bcbcbc;border-top:1px solid #b0b0b0"></div>
<div style="position:absolute;left:1156px;top:237px;width:298px;height:20px;background:#d4d4d4"></div>
<div class="bl" style="top:157px">Model (*Model_Space)</div>
<div class="bl" style="top:177px">Layout1 (*Paper_Space)</div>
<div class="bl" style="top:197px">Árbol A</div>
<div class="bl" style="top:217px">Árbol B</div>
<div class="bl" style="top:237px">Banco</div>
<div class="bl" style="top:257px">Papelera</div>
<div class="dt" style="top:309px">Lista de capas</div>
<div style="position:absolute;left:1155px;top:332px;width:300px;height:25px;background:#ababab"></div>
<div class="db" style="left:1156px;top:332px;width:58px"></div>
<div class="db" style="left:1215px;top:332px;width:59px"></div>
<div class="db" style="left:1275px;top:332px;width:59px"></div>
<div class="db" style="left:1335px;top:332px;width:59px"></div>
<div class="db" style="left:1395px;top:332px;width:58px"></div>
<div style="position:absolute;left:1155px;top:357px;width:300px;height:441px;background:#fff;border:1px solid #bcbcbc;border-bottom:none"></div>
<div style="position:absolute;left:1156px;top:378px;width:298px;height:20px;background:#0a4cd8"></div>
<div class="sw" style="top:364px;background:#fff"></div>
<div class="ll" style="top:358px">0</div>
<div class="sw" style="top:384px;background:#c8b586"></div>
<div class="ll" style="top:378px;color:#fff;-webkit-text-stroke-color:#fff">Caminos</div>
<div class="sw" style="top:404px;background:#c0c0c0"></div>
<div class="ll" style="top:398px">Instalaciones</div>
<div class="sw" style="top:424px;background:#66a02e"></div>
<div class="ll" style="top:418px">Plantas</div>
<svg style="position:absolute;left:1155px;top:108px" width="300" height="340" viewBox="1155 108 300 340">
<defs>
<g id="eye">
 <path d="M-7.6 0.4 C-6.2 -3.8 -2.8 -5.5 0.4 -5.5 C3.9 -5.5 6.7 -3.2 7.7 -0.3 C7.1 2.8 4 5.3 0 5.3 C-3.7 5.3 -6.7 3.2 -7.6 0.4Z" fill="#050505"/>
 <path d="M-5.3 0.1 C-4.4 -1.5 -3.2 -2.5 -1.6 -3 L2.4 -3 C3.8 -2.5 4.9 -1.5 5.5 -0.2 C4.4 2.2 2.4 3.5 0 3.5 C-2.4 3.5 -4.4 2.2 -5.3 0.1Z" fill="#fff"/>
 <circle cx="0.3" cy="-1" r="3.1" fill="#050505"/>
 <path d="M-1.6 -1.6 a1.6 1.4 0 0 1 1.8 -1.6" fill="none" stroke="#8a8a8a" stroke-width=".8"/>
</g>
<g id="pcl"><!-- small orange pencil: tip at 0,0 along +x -->
 <path d="M0 0 L3.6 -1.5 L3.6 1.5Z" fill="#d8b080" stroke="#7a5a30" stroke-width=".3"/>
 <path d="M0 0 L1.2 -.5 L1.2 .5Z" fill="#3a2a18"/>
 <rect x="3.6" y="-1.5" width="12" height="3" fill="#e9a53a"/>
 <rect x="3.6" y="-1.5" width="12" height="1" fill="#c98a28"/>
 <rect x="3.6" y=".7" width="12" height=".8" fill="#b87820"/>
 <path d="M15.6 -1.5 h2.4 a1 1.5 0 0 1 0 3 h-2.4z" fill="#e8282c"/>
</g>
<g id="lock">
 <path d="M-3 0 V-3 A3 3.2 0 0 1 3 -3 V0" fill="none" stroke="#c2c2c2" stroke-width="1.5"/>
 <rect x="-4.6" y="-.4" width="9.2" height="6.6" rx=".6" fill="#c2c2c2"/>
</g>
<g id="cbtn"><circle r="6.8" fill="#6d6d6d"/></g>
</defs>
<!-- title bar buttons -->
<use href="#cbtn" x="1164" y="118"/><path d="M1160.9 114.9 l6.2 6.2 M1167.1 114.9 l-6.2 6.2" stroke="#f4f4f4" stroke-width="1.9"/>
<use href="#cbtn" x="1182" y="118"/><g fill="none" stroke="#f0f0f0" stroke-width="1.1"><path d="M1180.4 116.4 v-1.4 h5.2 v4.6 h-1.4"/><rect x="1178.6" y="116.8" width="5.2" height="4.4"/></g>
<use href="#cbtn" x="1164" y="319"/><path d="M1160.9 315.9 l6.2 6.2 M1167.1 315.9 l-6.2 6.2" stroke="#f4f4f4" stroke-width="1.9"/>
<use href="#cbtn" x="1181.8" y="319"/><g fill="none" stroke="#f0f0f0" stroke-width="1.1"><path d="M1180.2 317.4 v-1.4 h5.2 v4.6 h-1.4"/><rect x="1178.4" y="317.8" width="5.2" height="4.4"/></g>
<!-- block toolbar -->
<use href="#eye" x="1174" y="143"/>
<g opacity=".32"><use href="#eye" x="1211" y="143"/></g>
<path d="M1243.4 143 h11.2 M1249 137.4 v11.2" stroke="#8a0000" stroke-width="3.6"/><path d="M1243.8 143 h10.4 M1249 137.8 v10.4" stroke="#fa0a0a" stroke-width="2.6"/>
<path d="M1280.4 143 h11.6" stroke="#8a0000" stroke-width="3.4"/><path d="M1280.8 143 h10.8" stroke="#fa0a0a" stroke-width="2.4"/>
<text x="1323.8" y="147.6" text-anchor="middle" font-family="Liberation Sans, sans-serif" font-size="12.2" fill="#1a1a1a">a|b</text>
<g transform="translate(1353.8,149.8) rotate(-43.8)"><use href="#pcl"/></g>
<rect x="1393.2" y="136.4" width="11.4" height="12.4" fill="#e4e4e4" stroke="#bdbdbd" stroke-width=".8"/>
<path d="M1394.6 138.4 C1399 137 1400.8 139.4 1400.4 144 h2.6 l-4 4.4 l-4 -4.4 h2.6 C1397.6 141.4 1397 139.4 1394.6 138.4Z" fill="#2a5cff" stroke="#1a3ce0" stroke-width=".5"/>
<rect x="1431" y="138.2" width="10" height="9.8" rx="1" fill="#e9684a"/>
<path d="M1433.4 140.6 l5.2 5 M1438.6 140.6 l-5.2 5" stroke="#fff" stroke-width="1.7"/>
<!-- block rows -->
<use href="#eye" x="1169" y="166.8"/><g transform="translate(1184.6,173.6) rotate(-43.8)"><use href="#pcl"/></g>
<use href="#eye" x="1169" y="186.8"/>
<use href="#eye" x="1169" y="206.8"/>
<use href="#eye" x="1169" y="226.8"/>
<g opacity=".78"><use href="#eye" x="1169" y="246.8"/></g><path d="M1162 242 h14 v10 h-14z" fill="#5a7aa0" opacity=".22"/>
<use href="#eye" x="1169" y="266.8"/>
<!-- layer toolbar -->
<use href="#eye" x="1185" y="343.6"/>
<g opacity=".32"><use href="#eye" x="1245" y="343.6"/></g>
<path d="M1299.2 344 h11.2 M1304.8 338.4 v11.2" stroke="#8a0000" stroke-width="3.6"/><path d="M1299.6 344 h10.4 M1304.8 338.8 v10.4" stroke="#fa0a0a" stroke-width="2.6"/>
<path d="M1359 344 h11.6" stroke="#8a0000" stroke-width="3.4"/><path d="M1359.4 344 h10.8" stroke="#fa0a0a" stroke-width="2.4"/>
<g transform="translate(1417.6,350.6) rotate(-43.8)"><use href="#pcl"/></g>
<!-- layer rows -->
<use href="#eye" x="1422.8" y="368"/><use href="#lock" x="1445" y="366.6"/>
<g transform="translate(1394.8,394.4) rotate(-43.8)"><use href="#pcl"/></g>
<g opacity=".5"><use href="#eye" x="1422.8" y="388"/></g><g opacity=".8"><use href="#lock" x="1445" y="386.6"/></g>
<use href="#eye" x="1422.8" y="408"/><use href="#lock" x="1445" y="406.6"/>
<use href="#eye" x="1422.8" y="428"/><use href="#lock" x="1445" y="426.6"/>
</svg>
<div style="position:absolute;left:1455px;top:108px;width:45px;height:690px;background:linear-gradient(90deg,#eeeeee,#e4e4e4 35%,#c8c8c8)"></div>
<div style="position:absolute;left:1454px;top:108px;width:1px;height:690px;background:#c4c4c4"></div>
<div style="position:absolute;left:1462px;top:116px;width:26px;height:2px;background:repeating-linear-gradient(90deg,#b0b0b0 0 2px,transparent 2px 6px)"></div>
<div style="position:absolute;left:1456px;top:120px;width:44px;height:43px;border-radius:6px 0 0 6px;background:#b6b6b6"></div>
<div style="position:absolute;left:1456px;top:167px;width:44px;height:43px;border-radius:6px 0 0 6px;background:#b6b6b6"></div>
<div style="position:absolute;left:1456px;top:418px;width:44px;height:43px;border-radius:6px 0 0 6px;background:#b6b6b6"></div>
<div style="position:absolute;left:1458px;top:262px;width:42px;height:1px;background:repeating-linear-gradient(90deg,#7a7a7a 0 1px,transparent 1px 3px)"></div>
<div style="position:absolute;left:1458px;top:410px;width:42px;height:1px;background:repeating-linear-gradient(90deg,#7a7a7a 0 1px,transparent 1px 3px)"></div>
<svg style="position:absolute;left:1455px;top:108px" width="45" height="420" viewBox="1455 108 45 420">
<defs>
<g id="win"><rect x=".4" y=".4" width="27.2" height="27" fill="#fff" stroke="#3a3a3a" stroke-width=".8"/><rect x="0" y="0" width="28" height="4.8" fill="#050505"/><rect x="1" y="1" width="3" height="3" fill="#fff"/></g>
</defs>
<!-- 1 property editor -->
<use href="#win" x="1463.2" y="127"/>
<path d="M1469.6 139.6 l8 -3.6 v9 l-8 3.6z" fill="#d8d8d8" stroke="#444" stroke-width=".7"/>
<path d="M1471.6 138.8 l8 -3.6 v9 l-8 3.6z" fill="#eee" stroke="#444" stroke-width=".7"/>
<path d="M1473.8 138 l8 -3.6 v9 l-8 3.6z" fill="#f8f8f8" stroke="#444" stroke-width=".7"/>
<path d="M1476 145 l4.6 -7 v5.4z" fill="#f4a0a0" stroke="#e04040" stroke-width=".6"/>
<!-- 2 block list -->
<use href="#win" x="1463.2" y="174.3"/>
<rect x="1470" y="183.6" width="10.6" height="7.4" fill="#f0e8b8" stroke="#666" stroke-width=".8"/>
<circle cx="1479.4" cy="191.6" r="4.6" fill="#f0e8b8" fill-opacity=".8" stroke="#666" stroke-width=".8"/>
<!-- 3 -->
<use href="#win" x="1463.2" y="220.8"/>
<rect x="1468.6" y="231.6" width="16.8" height="10.6" rx="2.4" fill="#f6f6f2" stroke="#c4d2ea" stroke-width="1"/>
<!-- 4 layer list -->
<use href="#win" x="1463.2" y="277.2"/>
<g fill="#050505"><rect x="1466" y="285.6" width="4.6" height="3" rx=".6"/><rect x="1466" y="291.4" width="4.6" height="3" rx=".6"/><rect x="1466" y="297.2" width="4.6" height="3" rx=".6"/></g>
<g fill="#fff" stroke="#555" stroke-width=".7"><rect x="1473" y="285.8" width="14.4" height="2.6"/><rect x="1473" y="291.6" width="14.4" height="2.6"/><rect x="1473" y="297.4" width="14.4" height="2.6"/></g>
<!-- 5 funnel -->
<use href="#win" x="1463.2" y="323.6"/>
<path d="M1470 333.2 h14.6 l-5.4 6 v6.4 l-3.6 -1.2 v-5.2z" fill="#f4f4f4" stroke="#555" stroke-width=".9" stroke-linejoin="round"/>
<ellipse cx="1477.3" cy="333.2" rx="7.3" ry="1.3" fill="#ddd" stroke="#555" stroke-width=".8"/>
<!-- 6 screw -->
<use href="#win" x="1463.2" y="369.2"/>
<path d="M1468.4 385 h17.6" stroke="#f0a0a0" stroke-width=".8" stroke-dasharray="3 1.2"/>
<path d="M1469.4 379.6 l3.2 2 v6.8 l-3.2 2z" fill="#fff" stroke="#444" stroke-width=".8"/>
<rect x="1472.6" y="381.8" width="11.4" height="6.4" fill="#9a9a9a" stroke="#555" stroke-width=".6"/>
<path d="M1475 381.8 v6.4 M1477 381.8 v6.4 M1479 381.8 v6.4 M1481 381.8 v6.4" stroke="#ddd" stroke-width=".6"/>
<!-- 7 command line -->
<use href="#win" x="1463.2" y="425.2"/>
<g stroke="#777" stroke-width=".7" stroke-dasharray="1.2 .5"><path d="M1466 434.4 h10 M1466 437.6 h12 M1466 440.8 h11 M1466 444 h13"/></g>
<path d="M1463.6 447.4 h27" stroke="#333" stroke-width=".7"/>
<path d="M1466 450 h2 M1470 450 h14" stroke="#444" stroke-width=".8" stroke-dasharray="1.4 .4"/>
<!-- 8 clipboard -->
<use href="#win" x="1463.2" y="472.2"/>
<rect x="1470.8" y="480.6" width="12.6" height="14.6" rx=".6" fill="#c58a2e" stroke="#94641a" stroke-width=".6"/>
<path d="M1472.4 482.4 h9.4 v9 l-2.4 2.4 h-7z" fill="#f8f8f8"/>
<path d="M1474 485 h6 M1474 487 h6 M1474 489 h4" stroke="#ccc" stroke-width=".8"/>
<rect x="1474.4" y="479.6" width="5.4" height="2.6" rx=".6" fill="#99998f" stroke="#666" stroke-width=".4"/>
</svg>
<div style="position:absolute;left:0;top:797px;width:1500px;height:47px;background:#dcdcdc;border-top:1px solid #c4c4c4"></div>
<div class="st" style="position:absolute;left:2px;top:806px;font-size:10px;line-height:13px;color:#111">47.0937,12.7851</div>
<div class="st" style="position:absolute;left:2px;top:826px;font-size:10px;line-height:13px;color:#111">@47.0937,12.7851</div>
<div style="position:absolute;left:253px;top:802px;width:1px;height:40px;background:#7e7e7e"></div>
<div style="position:absolute;left:254px;top:802px;width:1px;height:40px;background:#f4f4f4"></div>
<div class="st" style="position:absolute;left:256px;top:806px;font-size:10px;line-height:13px;color:#111">48.7984&lt;15°</div>
<div class="st" style="position:absolute;left:256px;top:826px;font-size:10px;line-height:13px;color:#111">@48.7984&lt;15°</div>
<div class="st" style="position:absolute;left:569px;top:816px;font-size:10px;line-height:13px;letter-spacing:.12px;color:#111;-webkit-text-stroke:.25px #111">Seleccionar entidad o región</div>
<div class="st" style="position:absolute;left:949px;top:816px;font-size:10px;line-height:13px;letter-spacing:.12px;color:#111;-webkit-text-stroke:.25px #111">No hay entidades seleccionadas.</div>
<div style="position:absolute;left:506px;top:819px;width:6px;height:6px;border-radius:3px;background:#cdcdcd"></div>
<div style="position:absolute;left:940px;top:819px;width:6px;height:6px;border-radius:3px;background:#cdcdcd"></div>
<div style="position:absolute;left:1269px;top:819px;width:6px;height:6px;border-radius:3px;background:#cdcdcd"></div>
<svg style="position:absolute;left:714px;top:803px" width="24" height="36" viewBox="714 803 24 36">
<rect x="717.5" y="806.4" width="17.4" height="29" rx="8.7" fill="#fff" stroke="#3a3a3a" stroke-width="1"/>
<path d="M717.5 819 Q726.2 817.6 734.9 819" fill="none" stroke="#3a3a3a" stroke-width="1"/>
<path d="M726.2 806.4 v3 M726.2 815.6 v2.6" stroke="#3a3a3a" stroke-width=".9"/>
<rect x="724.8" y="808.8" width="2.8" height="7" rx="1.4" fill="#fff" stroke="#3a3a3a" stroke-width=".9"/>
</svg>
<svg style="position:absolute;left:1255px;top:196px" width="96" height="96" viewBox="1255 196 96 96">
<defs><radialGradient id="ring" cx="1302.8" cy="244.8" r="39.4" gradientUnits="userSpaceOnUse">
<stop offset="0" stop-color="#ffffff" stop-opacity="0"/><stop offset=".70" stop-color="#ffffff" stop-opacity="0"/><stop offset=".80" stop-color="#f4f8fc" stop-opacity=".6"/><stop offset=".87" stop-color="#c8d6e4" stop-opacity=".75"/><stop offset=".93" stop-color="#abc0d4" stop-opacity=".9"/><stop offset=".975" stop-color="#a2b9d0" stop-opacity=".95"/><stop offset="1" stop-color="#a2b9d0" stop-opacity="0"/></radialGradient></defs>
<circle cx="1302.8" cy="244.8" r="39.4" fill="url(#ring)"/>
<path d="M1303.2 244.4 V267.2 L1308.5 262.2 L1312.5 272 L1316.2 270.4 L1312.2 261 L1318.8 260.6Z" fill="#fff" stroke="#0a0a0a" stroke-width="1.2" stroke-linejoin="round"/>
</svg>
</div></body></html>
